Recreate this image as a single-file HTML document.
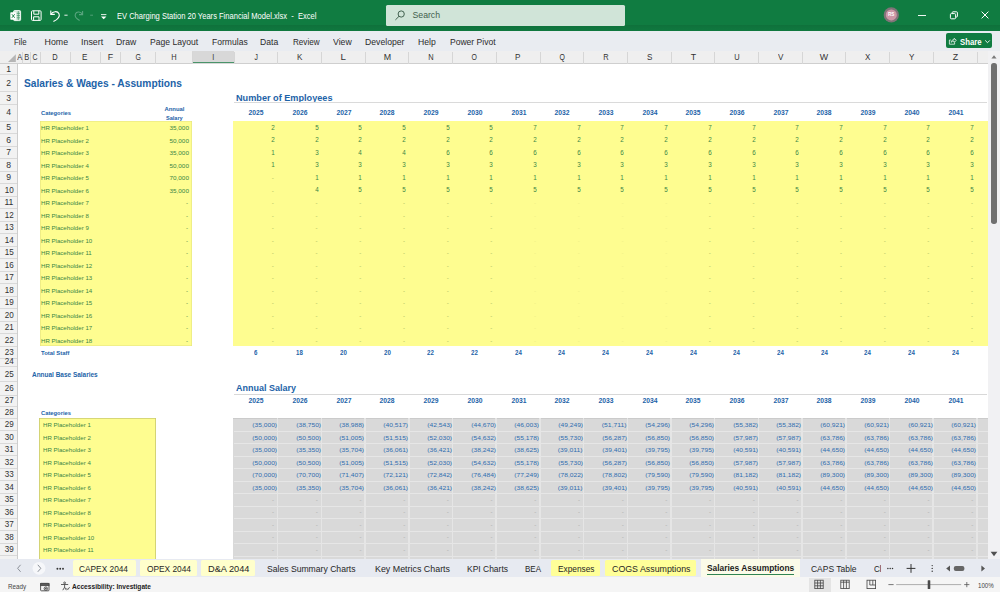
<!DOCTYPE html>
<html><head><meta charset="utf-8"><title>EV Charging Station 20 Years Financial Model.xlsx - Excel</title>
<style>
html,body{margin:0;padding:0;}
body{width:1000px;height:592px;overflow:hidden;background:#fff;font-family:"Liberation Sans",sans-serif;}
#r{position:relative;width:1000px;height:592px;overflow:hidden;}
#r div,#r span,#r svg{position:absolute;display:block;}
#r span{white-space:pre;}
</style></head><body><div id="r">
<div style="left:0.00px;top:0.00px;width:1000.00px;height:592.00px;background:#ffffff;"></div>
<span style="left:24.00px;top:77.40px;font-size:11.5px;line-height:13.80px;color:#1d63a8;font-weight:bold;transform:scaleX(0.8872);transform-origin:0 50%;">Salaries &amp; Wages - Assumptions</span>
<span style="left:40.80px;top:109.48px;font-size:6.2px;line-height:7.44px;color:#1d63a8;font-weight:bold;transform:scaleX(0.9362);transform-origin:0 50%;">Categories</span>
<span style="left:163.69px;top:105.18px;font-size:6.2px;line-height:7.44px;color:#1d63a8;font-weight:bold;transform:scaleX(0.9519);transform-origin:50% 50%;">Annual</span>
<span style="left:164.79px;top:113.68px;font-size:6.2px;line-height:7.44px;color:#1d63a8;font-weight:bold;transform:scaleX(0.9025);transform-origin:50% 50%;">Salary</span>
<div style="left:39.60px;top:121.40px;width:152.40px;height:224.80px;background:#fefd90;box-shadow:inset 0 0 0 0.6px rgba(150,150,80,0.25);"></div>
<span style="left:40.80px;top:124.23px;font-size:6.2px;line-height:7.44px;color:#3a8545;transform:scaleX(0.9850);transform-origin:0 50%;">HR Placeholder 1</span>
<span style="left:169.84px;top:124.23px;font-size:6.2px;line-height:7.44px;color:#3a8545;transform:scaleX(1.0283);transform-origin:100% 50%;">35,000</span>
<span style="left:40.80px;top:136.73px;font-size:6.2px;line-height:7.44px;color:#3a8545;transform:scaleX(0.9850);transform-origin:0 50%;">HR Placeholder 2</span>
<span style="left:169.84px;top:136.73px;font-size:6.2px;line-height:7.44px;color:#3a8545;transform:scaleX(1.0283);transform-origin:100% 50%;">50,000</span>
<span style="left:40.80px;top:149.23px;font-size:6.2px;line-height:7.44px;color:#3a8545;transform:scaleX(0.9850);transform-origin:0 50%;">HR Placeholder 3</span>
<span style="left:169.84px;top:149.23px;font-size:6.2px;line-height:7.44px;color:#3a8545;transform:scaleX(1.0283);transform-origin:100% 50%;">35,000</span>
<span style="left:40.80px;top:161.73px;font-size:6.2px;line-height:7.44px;color:#3a8545;transform:scaleX(0.9850);transform-origin:0 50%;">HR Placeholder 4</span>
<span style="left:169.84px;top:161.73px;font-size:6.2px;line-height:7.44px;color:#3a8545;transform:scaleX(1.0283);transform-origin:100% 50%;">50,000</span>
<span style="left:40.80px;top:174.23px;font-size:6.2px;line-height:7.44px;color:#3a8545;transform:scaleX(0.9850);transform-origin:0 50%;">HR Placeholder 5</span>
<span style="left:169.84px;top:174.23px;font-size:6.2px;line-height:7.44px;color:#3a8545;transform:scaleX(1.0283);transform-origin:100% 50%;">70,000</span>
<span style="left:40.80px;top:186.73px;font-size:6.2px;line-height:7.44px;color:#3a8545;transform:scaleX(0.9850);transform-origin:0 50%;">HR Placeholder 6</span>
<span style="left:169.84px;top:186.73px;font-size:6.2px;line-height:7.44px;color:#3a8545;transform:scaleX(1.0283);transform-origin:100% 50%;">35,000</span>
<span style="left:40.80px;top:199.23px;font-size:6.2px;line-height:7.44px;color:#3a8545;transform:scaleX(0.9850);transform-origin:0 50%;">HR Placeholder 7</span>
<span style="left:185.94px;top:199.23px;font-size:6.2px;line-height:7.44px;color:#3a8545;">-</span>
<span style="left:40.80px;top:211.73px;font-size:6.2px;line-height:7.44px;color:#3a8545;transform:scaleX(0.9850);transform-origin:0 50%;">HR Placeholder 8</span>
<span style="left:185.94px;top:211.73px;font-size:6.2px;line-height:7.44px;color:#3a8545;">-</span>
<span style="left:40.80px;top:224.23px;font-size:6.2px;line-height:7.44px;color:#3a8545;transform:scaleX(0.9850);transform-origin:0 50%;">HR Placeholder 9</span>
<span style="left:185.94px;top:224.23px;font-size:6.2px;line-height:7.44px;color:#3a8545;">-</span>
<span style="left:40.80px;top:236.73px;font-size:6.2px;line-height:7.44px;color:#3a8545;transform:scaleX(0.9850);transform-origin:0 50%;">HR Placeholder 10</span>
<span style="left:185.94px;top:236.73px;font-size:6.2px;line-height:7.44px;color:#3a8545;">-</span>
<span style="left:40.80px;top:249.23px;font-size:6.2px;line-height:7.44px;color:#3a8545;transform:scaleX(0.9850);transform-origin:0 50%;">HR Placeholder 11</span>
<span style="left:185.94px;top:249.23px;font-size:6.2px;line-height:7.44px;color:#3a8545;">-</span>
<span style="left:40.80px;top:261.73px;font-size:6.2px;line-height:7.44px;color:#3a8545;transform:scaleX(0.9850);transform-origin:0 50%;">HR Placeholder 12</span>
<span style="left:185.94px;top:261.73px;font-size:6.2px;line-height:7.44px;color:#3a8545;">-</span>
<span style="left:40.80px;top:274.23px;font-size:6.2px;line-height:7.44px;color:#3a8545;transform:scaleX(0.9850);transform-origin:0 50%;">HR Placeholder 13</span>
<span style="left:185.94px;top:274.23px;font-size:6.2px;line-height:7.44px;color:#3a8545;">-</span>
<span style="left:40.80px;top:286.73px;font-size:6.2px;line-height:7.44px;color:#3a8545;transform:scaleX(0.9850);transform-origin:0 50%;">HR Placeholder 14</span>
<span style="left:185.94px;top:286.73px;font-size:6.2px;line-height:7.44px;color:#3a8545;">-</span>
<span style="left:40.80px;top:299.23px;font-size:6.2px;line-height:7.44px;color:#3a8545;transform:scaleX(0.9850);transform-origin:0 50%;">HR Placeholder 15</span>
<span style="left:185.94px;top:299.23px;font-size:6.2px;line-height:7.44px;color:#3a8545;">-</span>
<span style="left:40.80px;top:311.73px;font-size:6.2px;line-height:7.44px;color:#3a8545;transform:scaleX(0.9850);transform-origin:0 50%;">HR Placeholder 16</span>
<span style="left:185.94px;top:311.73px;font-size:6.2px;line-height:7.44px;color:#3a8545;">-</span>
<span style="left:40.80px;top:324.23px;font-size:6.2px;line-height:7.44px;color:#3a8545;transform:scaleX(0.9850);transform-origin:0 50%;">HR Placeholder 17</span>
<span style="left:185.94px;top:324.23px;font-size:6.2px;line-height:7.44px;color:#3a8545;">-</span>
<span style="left:40.80px;top:336.73px;font-size:6.2px;line-height:7.44px;color:#3a8545;transform:scaleX(0.9850);transform-origin:0 50%;">HR Placeholder 18</span>
<span style="left:185.94px;top:336.73px;font-size:6.2px;line-height:7.44px;color:#3a8545;">-</span>
<span style="left:40.80px;top:348.88px;font-size:6.2px;line-height:7.44px;color:#1d63a8;font-weight:bold;transform:scaleX(0.9547);transform-origin:0 50%;">Total Staff</span>
<span style="left:32.30px;top:370.96px;font-size:6.4px;line-height:7.68px;color:#1d63a8;font-weight:bold;transform:scaleX(1.0108);transform-origin:0 50%;">Annual Base Salaries</span>
<span style="left:235.50px;top:91.92px;font-size:9.8px;line-height:11.76px;color:#1d63a8;font-weight:bold;transform:scaleX(0.9326);transform-origin:0 50%;">Number of Employees</span>
<div style="left:234.00px;top:102.20px;width:752.50px;height:0.90px;background:#dadada;"></div>
<div style="left:233.40px;top:121.40px;width:754.20px;height:224.80px;background:#fefd90;"></div>
<span style="left:249.34px;top:109.42px;font-size:6.3px;line-height:7.56px;color:#1d63a8;font-weight:bold;transform:scaleX(1.0702);transform-origin:50% 50%;">2025</span>
<span style="left:249.34px;top:397.12px;font-size:6.3px;line-height:7.56px;color:#1d63a8;font-weight:bold;transform:scaleX(1.0702);transform-origin:50% 50%;">2025</span>
<span style="left:270.83px;top:123.99px;font-size:6.6px;line-height:7.92px;color:#3a8545;transform:scaleX(0.9535);transform-origin:100% 50%;">2</span>
<span style="left:270.83px;top:136.49px;font-size:6.6px;line-height:7.92px;color:#3a8545;transform:scaleX(0.9535);transform-origin:100% 50%;">2</span>
<span style="left:270.83px;top:148.99px;font-size:6.6px;line-height:7.92px;color:#3a8545;transform:scaleX(0.9535);transform-origin:100% 50%;">1</span>
<span style="left:270.83px;top:161.49px;font-size:6.6px;line-height:7.92px;color:#3a8545;transform:scaleX(0.9535);transform-origin:100% 50%;">1</span>
<span style="left:271.84px;top:174.23px;font-size:6.2px;line-height:7.44px;color:#9fb35a;">-</span>
<span style="left:271.84px;top:186.73px;font-size:6.2px;line-height:7.44px;color:#9fb35a;">-</span>
<span style="left:271.84px;top:199.23px;font-size:6.2px;line-height:7.44px;color:#9fb35a;">-</span>
<span style="left:271.84px;top:211.73px;font-size:6.2px;line-height:7.44px;color:#9fb35a;">-</span>
<span style="left:271.84px;top:224.23px;font-size:6.2px;line-height:7.44px;color:#9fb35a;">-</span>
<span style="left:271.84px;top:236.73px;font-size:6.2px;line-height:7.44px;color:#9fb35a;">-</span>
<span style="left:271.84px;top:249.23px;font-size:6.2px;line-height:7.44px;color:#9fb35a;">-</span>
<span style="left:271.84px;top:261.73px;font-size:6.2px;line-height:7.44px;color:#9fb35a;">-</span>
<span style="left:271.84px;top:274.23px;font-size:6.2px;line-height:7.44px;color:#9fb35a;">-</span>
<span style="left:271.84px;top:286.73px;font-size:6.2px;line-height:7.44px;color:#9fb35a;">-</span>
<span style="left:271.84px;top:299.23px;font-size:6.2px;line-height:7.44px;color:#9fb35a;">-</span>
<span style="left:271.84px;top:311.73px;font-size:6.2px;line-height:7.44px;color:#9fb35a;">-</span>
<span style="left:271.84px;top:324.23px;font-size:6.2px;line-height:7.44px;color:#9fb35a;">-</span>
<span style="left:271.84px;top:336.73px;font-size:6.2px;line-height:7.44px;color:#9fb35a;">-</span>
<span style="left:254.30px;top:348.82px;font-size:6.3px;line-height:7.56px;color:#1d63a8;font-weight:bold;transform:scaleX(0.9704);transform-origin:50% 50%;">6</span>
<span style="left:293.04px;top:109.42px;font-size:6.3px;line-height:7.56px;color:#1d63a8;font-weight:bold;transform:scaleX(1.0702);transform-origin:50% 50%;">2026</span>
<span style="left:293.04px;top:397.12px;font-size:6.3px;line-height:7.56px;color:#1d63a8;font-weight:bold;transform:scaleX(1.0702);transform-origin:50% 50%;">2026</span>
<span style="left:314.53px;top:123.99px;font-size:6.6px;line-height:7.92px;color:#3a8545;transform:scaleX(0.9535);transform-origin:100% 50%;">5</span>
<span style="left:314.53px;top:136.49px;font-size:6.6px;line-height:7.92px;color:#3a8545;transform:scaleX(0.9535);transform-origin:100% 50%;">2</span>
<span style="left:314.53px;top:148.99px;font-size:6.6px;line-height:7.92px;color:#3a8545;transform:scaleX(0.9535);transform-origin:100% 50%;">3</span>
<span style="left:314.53px;top:161.49px;font-size:6.6px;line-height:7.92px;color:#3a8545;transform:scaleX(0.9535);transform-origin:100% 50%;">3</span>
<span style="left:314.53px;top:173.99px;font-size:6.6px;line-height:7.92px;color:#3a8545;transform:scaleX(0.9535);transform-origin:100% 50%;">1</span>
<span style="left:314.53px;top:186.49px;font-size:6.6px;line-height:7.92px;color:#3a8545;transform:scaleX(0.9535);transform-origin:100% 50%;">4</span>
<span style="left:315.54px;top:199.23px;font-size:6.2px;line-height:7.44px;color:#9fb35a;">-</span>
<span style="left:315.54px;top:211.73px;font-size:6.2px;line-height:7.44px;color:#9fb35a;">-</span>
<span style="left:315.54px;top:224.23px;font-size:6.2px;line-height:7.44px;color:#9fb35a;">-</span>
<span style="left:315.54px;top:236.73px;font-size:6.2px;line-height:7.44px;color:#9fb35a;">-</span>
<span style="left:315.54px;top:249.23px;font-size:6.2px;line-height:7.44px;color:#9fb35a;">-</span>
<span style="left:315.54px;top:261.73px;font-size:6.2px;line-height:7.44px;color:#9fb35a;">-</span>
<span style="left:315.54px;top:274.23px;font-size:6.2px;line-height:7.44px;color:#9fb35a;">-</span>
<span style="left:315.54px;top:286.73px;font-size:6.2px;line-height:7.44px;color:#9fb35a;">-</span>
<span style="left:315.54px;top:299.23px;font-size:6.2px;line-height:7.44px;color:#9fb35a;">-</span>
<span style="left:315.54px;top:311.73px;font-size:6.2px;line-height:7.44px;color:#9fb35a;">-</span>
<span style="left:315.54px;top:324.23px;font-size:6.2px;line-height:7.44px;color:#9fb35a;">-</span>
<span style="left:315.54px;top:336.73px;font-size:6.2px;line-height:7.44px;color:#9fb35a;">-</span>
<span style="left:296.25px;top:348.82px;font-size:6.3px;line-height:7.56px;color:#1d63a8;font-weight:bold;transform:scaleX(0.9704);transform-origin:50% 50%;">18</span>
<span style="left:336.74px;top:109.42px;font-size:6.3px;line-height:7.56px;color:#1d63a8;font-weight:bold;transform:scaleX(1.0702);transform-origin:50% 50%;">2027</span>
<span style="left:336.74px;top:397.12px;font-size:6.3px;line-height:7.56px;color:#1d63a8;font-weight:bold;transform:scaleX(1.0702);transform-origin:50% 50%;">2027</span>
<span style="left:358.23px;top:123.99px;font-size:6.6px;line-height:7.92px;color:#3a8545;transform:scaleX(0.9535);transform-origin:100% 50%;">5</span>
<span style="left:358.23px;top:136.49px;font-size:6.6px;line-height:7.92px;color:#3a8545;transform:scaleX(0.9535);transform-origin:100% 50%;">2</span>
<span style="left:358.23px;top:148.99px;font-size:6.6px;line-height:7.92px;color:#3a8545;transform:scaleX(0.9535);transform-origin:100% 50%;">4</span>
<span style="left:358.23px;top:161.49px;font-size:6.6px;line-height:7.92px;color:#3a8545;transform:scaleX(0.9535);transform-origin:100% 50%;">3</span>
<span style="left:358.23px;top:173.99px;font-size:6.6px;line-height:7.92px;color:#3a8545;transform:scaleX(0.9535);transform-origin:100% 50%;">1</span>
<span style="left:358.23px;top:186.49px;font-size:6.6px;line-height:7.92px;color:#3a8545;transform:scaleX(0.9535);transform-origin:100% 50%;">5</span>
<span style="left:359.24px;top:199.23px;font-size:6.2px;line-height:7.44px;color:#9fb35a;">-</span>
<span style="left:359.24px;top:211.73px;font-size:6.2px;line-height:7.44px;color:#9fb35a;">-</span>
<span style="left:359.24px;top:224.23px;font-size:6.2px;line-height:7.44px;color:#9fb35a;">-</span>
<span style="left:359.24px;top:236.73px;font-size:6.2px;line-height:7.44px;color:#9fb35a;">-</span>
<span style="left:359.24px;top:249.23px;font-size:6.2px;line-height:7.44px;color:#9fb35a;">-</span>
<span style="left:359.24px;top:261.73px;font-size:6.2px;line-height:7.44px;color:#9fb35a;">-</span>
<span style="left:359.24px;top:274.23px;font-size:6.2px;line-height:7.44px;color:#9fb35a;">-</span>
<span style="left:359.24px;top:286.73px;font-size:6.2px;line-height:7.44px;color:#9fb35a;">-</span>
<span style="left:359.24px;top:299.23px;font-size:6.2px;line-height:7.44px;color:#9fb35a;">-</span>
<span style="left:359.24px;top:311.73px;font-size:6.2px;line-height:7.44px;color:#9fb35a;">-</span>
<span style="left:359.24px;top:324.23px;font-size:6.2px;line-height:7.44px;color:#9fb35a;">-</span>
<span style="left:359.24px;top:336.73px;font-size:6.2px;line-height:7.44px;color:#9fb35a;">-</span>
<span style="left:339.95px;top:348.82px;font-size:6.3px;line-height:7.56px;color:#1d63a8;font-weight:bold;transform:scaleX(0.9704);transform-origin:50% 50%;">20</span>
<span style="left:380.44px;top:109.42px;font-size:6.3px;line-height:7.56px;color:#1d63a8;font-weight:bold;transform:scaleX(1.0702);transform-origin:50% 50%;">2028</span>
<span style="left:380.44px;top:397.12px;font-size:6.3px;line-height:7.56px;color:#1d63a8;font-weight:bold;transform:scaleX(1.0702);transform-origin:50% 50%;">2028</span>
<span style="left:401.93px;top:123.99px;font-size:6.6px;line-height:7.92px;color:#3a8545;transform:scaleX(0.9535);transform-origin:100% 50%;">5</span>
<span style="left:401.93px;top:136.49px;font-size:6.6px;line-height:7.92px;color:#3a8545;transform:scaleX(0.9535);transform-origin:100% 50%;">2</span>
<span style="left:401.93px;top:148.99px;font-size:6.6px;line-height:7.92px;color:#3a8545;transform:scaleX(0.9535);transform-origin:100% 50%;">4</span>
<span style="left:401.93px;top:161.49px;font-size:6.6px;line-height:7.92px;color:#3a8545;transform:scaleX(0.9535);transform-origin:100% 50%;">3</span>
<span style="left:401.93px;top:173.99px;font-size:6.6px;line-height:7.92px;color:#3a8545;transform:scaleX(0.9535);transform-origin:100% 50%;">1</span>
<span style="left:401.93px;top:186.49px;font-size:6.6px;line-height:7.92px;color:#3a8545;transform:scaleX(0.9535);transform-origin:100% 50%;">5</span>
<span style="left:402.94px;top:199.23px;font-size:6.2px;line-height:7.44px;color:#9fb35a;">-</span>
<span style="left:402.94px;top:211.73px;font-size:6.2px;line-height:7.44px;color:#9fb35a;">-</span>
<span style="left:402.94px;top:224.23px;font-size:6.2px;line-height:7.44px;color:#9fb35a;">-</span>
<span style="left:402.94px;top:236.73px;font-size:6.2px;line-height:7.44px;color:#9fb35a;">-</span>
<span style="left:402.94px;top:249.23px;font-size:6.2px;line-height:7.44px;color:#9fb35a;">-</span>
<span style="left:402.94px;top:261.73px;font-size:6.2px;line-height:7.44px;color:#9fb35a;">-</span>
<span style="left:402.94px;top:274.23px;font-size:6.2px;line-height:7.44px;color:#9fb35a;">-</span>
<span style="left:402.94px;top:286.73px;font-size:6.2px;line-height:7.44px;color:#9fb35a;">-</span>
<span style="left:402.94px;top:299.23px;font-size:6.2px;line-height:7.44px;color:#9fb35a;">-</span>
<span style="left:402.94px;top:311.73px;font-size:6.2px;line-height:7.44px;color:#9fb35a;">-</span>
<span style="left:402.94px;top:324.23px;font-size:6.2px;line-height:7.44px;color:#9fb35a;">-</span>
<span style="left:402.94px;top:336.73px;font-size:6.2px;line-height:7.44px;color:#9fb35a;">-</span>
<span style="left:383.65px;top:348.82px;font-size:6.3px;line-height:7.56px;color:#1d63a8;font-weight:bold;transform:scaleX(0.9704);transform-origin:50% 50%;">20</span>
<span style="left:424.14px;top:109.42px;font-size:6.3px;line-height:7.56px;color:#1d63a8;font-weight:bold;transform:scaleX(1.0702);transform-origin:50% 50%;">2029</span>
<span style="left:424.14px;top:397.12px;font-size:6.3px;line-height:7.56px;color:#1d63a8;font-weight:bold;transform:scaleX(1.0702);transform-origin:50% 50%;">2029</span>
<span style="left:445.63px;top:123.99px;font-size:6.6px;line-height:7.92px;color:#3a8545;transform:scaleX(0.9535);transform-origin:100% 50%;">5</span>
<span style="left:445.63px;top:136.49px;font-size:6.6px;line-height:7.92px;color:#3a8545;transform:scaleX(0.9535);transform-origin:100% 50%;">2</span>
<span style="left:445.63px;top:148.99px;font-size:6.6px;line-height:7.92px;color:#3a8545;transform:scaleX(0.9535);transform-origin:100% 50%;">6</span>
<span style="left:445.63px;top:161.49px;font-size:6.6px;line-height:7.92px;color:#3a8545;transform:scaleX(0.9535);transform-origin:100% 50%;">3</span>
<span style="left:445.63px;top:173.99px;font-size:6.6px;line-height:7.92px;color:#3a8545;transform:scaleX(0.9535);transform-origin:100% 50%;">1</span>
<span style="left:445.63px;top:186.49px;font-size:6.6px;line-height:7.92px;color:#3a8545;transform:scaleX(0.9535);transform-origin:100% 50%;">5</span>
<span style="left:446.64px;top:199.23px;font-size:6.2px;line-height:7.44px;color:#9fb35a;">-</span>
<span style="left:446.64px;top:211.73px;font-size:6.2px;line-height:7.44px;color:#9fb35a;">-</span>
<span style="left:446.64px;top:224.23px;font-size:6.2px;line-height:7.44px;color:#9fb35a;">-</span>
<span style="left:446.64px;top:236.73px;font-size:6.2px;line-height:7.44px;color:#9fb35a;">-</span>
<span style="left:446.64px;top:249.23px;font-size:6.2px;line-height:7.44px;color:#9fb35a;">-</span>
<span style="left:446.64px;top:261.73px;font-size:6.2px;line-height:7.44px;color:#9fb35a;">-</span>
<span style="left:446.64px;top:274.23px;font-size:6.2px;line-height:7.44px;color:#9fb35a;">-</span>
<span style="left:446.64px;top:286.73px;font-size:6.2px;line-height:7.44px;color:#9fb35a;">-</span>
<span style="left:446.64px;top:299.23px;font-size:6.2px;line-height:7.44px;color:#9fb35a;">-</span>
<span style="left:446.64px;top:311.73px;font-size:6.2px;line-height:7.44px;color:#9fb35a;">-</span>
<span style="left:446.64px;top:324.23px;font-size:6.2px;line-height:7.44px;color:#9fb35a;">-</span>
<span style="left:446.64px;top:336.73px;font-size:6.2px;line-height:7.44px;color:#9fb35a;">-</span>
<span style="left:427.35px;top:348.82px;font-size:6.3px;line-height:7.56px;color:#1d63a8;font-weight:bold;transform:scaleX(0.9704);transform-origin:50% 50%;">22</span>
<span style="left:467.84px;top:109.42px;font-size:6.3px;line-height:7.56px;color:#1d63a8;font-weight:bold;transform:scaleX(1.0702);transform-origin:50% 50%;">2030</span>
<span style="left:467.84px;top:397.12px;font-size:6.3px;line-height:7.56px;color:#1d63a8;font-weight:bold;transform:scaleX(1.0702);transform-origin:50% 50%;">2030</span>
<span style="left:489.33px;top:123.99px;font-size:6.6px;line-height:7.92px;color:#3a8545;transform:scaleX(0.9535);transform-origin:100% 50%;">5</span>
<span style="left:489.33px;top:136.49px;font-size:6.6px;line-height:7.92px;color:#3a8545;transform:scaleX(0.9535);transform-origin:100% 50%;">2</span>
<span style="left:489.33px;top:148.99px;font-size:6.6px;line-height:7.92px;color:#3a8545;transform:scaleX(0.9535);transform-origin:100% 50%;">6</span>
<span style="left:489.33px;top:161.49px;font-size:6.6px;line-height:7.92px;color:#3a8545;transform:scaleX(0.9535);transform-origin:100% 50%;">3</span>
<span style="left:489.33px;top:173.99px;font-size:6.6px;line-height:7.92px;color:#3a8545;transform:scaleX(0.9535);transform-origin:100% 50%;">1</span>
<span style="left:489.33px;top:186.49px;font-size:6.6px;line-height:7.92px;color:#3a8545;transform:scaleX(0.9535);transform-origin:100% 50%;">5</span>
<span style="left:490.34px;top:199.23px;font-size:6.2px;line-height:7.44px;color:#9fb35a;">-</span>
<span style="left:490.34px;top:211.73px;font-size:6.2px;line-height:7.44px;color:#9fb35a;">-</span>
<span style="left:490.34px;top:224.23px;font-size:6.2px;line-height:7.44px;color:#9fb35a;">-</span>
<span style="left:490.34px;top:236.73px;font-size:6.2px;line-height:7.44px;color:#9fb35a;">-</span>
<span style="left:490.34px;top:249.23px;font-size:6.2px;line-height:7.44px;color:#9fb35a;">-</span>
<span style="left:490.34px;top:261.73px;font-size:6.2px;line-height:7.44px;color:#9fb35a;">-</span>
<span style="left:490.34px;top:274.23px;font-size:6.2px;line-height:7.44px;color:#9fb35a;">-</span>
<span style="left:490.34px;top:286.73px;font-size:6.2px;line-height:7.44px;color:#9fb35a;">-</span>
<span style="left:490.34px;top:299.23px;font-size:6.2px;line-height:7.44px;color:#9fb35a;">-</span>
<span style="left:490.34px;top:311.73px;font-size:6.2px;line-height:7.44px;color:#9fb35a;">-</span>
<span style="left:490.34px;top:324.23px;font-size:6.2px;line-height:7.44px;color:#9fb35a;">-</span>
<span style="left:490.34px;top:336.73px;font-size:6.2px;line-height:7.44px;color:#9fb35a;">-</span>
<span style="left:471.05px;top:348.82px;font-size:6.3px;line-height:7.56px;color:#1d63a8;font-weight:bold;transform:scaleX(0.9704);transform-origin:50% 50%;">22</span>
<span style="left:511.54px;top:109.42px;font-size:6.3px;line-height:7.56px;color:#1d63a8;font-weight:bold;transform:scaleX(1.0702);transform-origin:50% 50%;">2031</span>
<span style="left:511.54px;top:397.12px;font-size:6.3px;line-height:7.56px;color:#1d63a8;font-weight:bold;transform:scaleX(1.0702);transform-origin:50% 50%;">2031</span>
<span style="left:533.03px;top:123.99px;font-size:6.6px;line-height:7.92px;color:#3a8545;transform:scaleX(0.9535);transform-origin:100% 50%;">7</span>
<span style="left:533.03px;top:136.49px;font-size:6.6px;line-height:7.92px;color:#3a8545;transform:scaleX(0.9535);transform-origin:100% 50%;">2</span>
<span style="left:533.03px;top:148.99px;font-size:6.6px;line-height:7.92px;color:#3a8545;transform:scaleX(0.9535);transform-origin:100% 50%;">6</span>
<span style="left:533.03px;top:161.49px;font-size:6.6px;line-height:7.92px;color:#3a8545;transform:scaleX(0.9535);transform-origin:100% 50%;">3</span>
<span style="left:533.03px;top:173.99px;font-size:6.6px;line-height:7.92px;color:#3a8545;transform:scaleX(0.9535);transform-origin:100% 50%;">1</span>
<span style="left:533.03px;top:186.49px;font-size:6.6px;line-height:7.92px;color:#3a8545;transform:scaleX(0.9535);transform-origin:100% 50%;">5</span>
<span style="left:534.04px;top:199.23px;font-size:6.2px;line-height:7.44px;color:#ecec84;">-</span>
<span style="left:534.04px;top:211.73px;font-size:6.2px;line-height:7.44px;color:#ecec84;">-</span>
<span style="left:534.04px;top:224.23px;font-size:6.2px;line-height:7.44px;color:#ecec84;">-</span>
<span style="left:534.04px;top:236.73px;font-size:6.2px;line-height:7.44px;color:#ecec84;">-</span>
<span style="left:534.04px;top:249.23px;font-size:6.2px;line-height:7.44px;color:#ecec84;">-</span>
<span style="left:534.04px;top:261.73px;font-size:6.2px;line-height:7.44px;color:#ecec84;">-</span>
<span style="left:534.04px;top:274.23px;font-size:6.2px;line-height:7.44px;color:#ecec84;">-</span>
<span style="left:534.04px;top:286.73px;font-size:6.2px;line-height:7.44px;color:#ecec84;">-</span>
<span style="left:534.04px;top:299.23px;font-size:6.2px;line-height:7.44px;color:#ecec84;">-</span>
<span style="left:534.04px;top:311.73px;font-size:6.2px;line-height:7.44px;color:#ecec84;">-</span>
<span style="left:534.04px;top:324.23px;font-size:6.2px;line-height:7.44px;color:#ecec84;">-</span>
<span style="left:534.04px;top:336.73px;font-size:6.2px;line-height:7.44px;color:#ecec84;">-</span>
<span style="left:514.75px;top:348.82px;font-size:6.3px;line-height:7.56px;color:#1d63a8;font-weight:bold;transform:scaleX(0.9704);transform-origin:50% 50%;">24</span>
<span style="left:555.24px;top:109.42px;font-size:6.3px;line-height:7.56px;color:#1d63a8;font-weight:bold;transform:scaleX(1.0702);transform-origin:50% 50%;">2032</span>
<span style="left:555.24px;top:397.12px;font-size:6.3px;line-height:7.56px;color:#1d63a8;font-weight:bold;transform:scaleX(1.0702);transform-origin:50% 50%;">2032</span>
<span style="left:576.73px;top:123.99px;font-size:6.6px;line-height:7.92px;color:#3a8545;transform:scaleX(0.9535);transform-origin:100% 50%;">7</span>
<span style="left:576.73px;top:136.49px;font-size:6.6px;line-height:7.92px;color:#3a8545;transform:scaleX(0.9535);transform-origin:100% 50%;">2</span>
<span style="left:576.73px;top:148.99px;font-size:6.6px;line-height:7.92px;color:#3a8545;transform:scaleX(0.9535);transform-origin:100% 50%;">6</span>
<span style="left:576.73px;top:161.49px;font-size:6.6px;line-height:7.92px;color:#3a8545;transform:scaleX(0.9535);transform-origin:100% 50%;">3</span>
<span style="left:576.73px;top:173.99px;font-size:6.6px;line-height:7.92px;color:#3a8545;transform:scaleX(0.9535);transform-origin:100% 50%;">1</span>
<span style="left:576.73px;top:186.49px;font-size:6.6px;line-height:7.92px;color:#3a8545;transform:scaleX(0.9535);transform-origin:100% 50%;">5</span>
<span style="left:577.74px;top:199.23px;font-size:6.2px;line-height:7.44px;color:#ecec84;">-</span>
<span style="left:577.74px;top:211.73px;font-size:6.2px;line-height:7.44px;color:#ecec84;">-</span>
<span style="left:577.74px;top:224.23px;font-size:6.2px;line-height:7.44px;color:#ecec84;">-</span>
<span style="left:577.74px;top:236.73px;font-size:6.2px;line-height:7.44px;color:#ecec84;">-</span>
<span style="left:577.74px;top:249.23px;font-size:6.2px;line-height:7.44px;color:#ecec84;">-</span>
<span style="left:577.74px;top:261.73px;font-size:6.2px;line-height:7.44px;color:#ecec84;">-</span>
<span style="left:577.74px;top:274.23px;font-size:6.2px;line-height:7.44px;color:#ecec84;">-</span>
<span style="left:577.74px;top:286.73px;font-size:6.2px;line-height:7.44px;color:#ecec84;">-</span>
<span style="left:577.74px;top:299.23px;font-size:6.2px;line-height:7.44px;color:#ecec84;">-</span>
<span style="left:577.74px;top:311.73px;font-size:6.2px;line-height:7.44px;color:#ecec84;">-</span>
<span style="left:577.74px;top:324.23px;font-size:6.2px;line-height:7.44px;color:#ecec84;">-</span>
<span style="left:577.74px;top:336.73px;font-size:6.2px;line-height:7.44px;color:#ecec84;">-</span>
<span style="left:558.45px;top:348.82px;font-size:6.3px;line-height:7.56px;color:#1d63a8;font-weight:bold;transform:scaleX(0.9704);transform-origin:50% 50%;">24</span>
<span style="left:598.94px;top:109.42px;font-size:6.3px;line-height:7.56px;color:#1d63a8;font-weight:bold;transform:scaleX(1.0702);transform-origin:50% 50%;">2033</span>
<span style="left:598.94px;top:397.12px;font-size:6.3px;line-height:7.56px;color:#1d63a8;font-weight:bold;transform:scaleX(1.0702);transform-origin:50% 50%;">2033</span>
<span style="left:620.43px;top:123.99px;font-size:6.6px;line-height:7.92px;color:#3a8545;transform:scaleX(0.9535);transform-origin:100% 50%;">7</span>
<span style="left:620.43px;top:136.49px;font-size:6.6px;line-height:7.92px;color:#3a8545;transform:scaleX(0.9535);transform-origin:100% 50%;">2</span>
<span style="left:620.43px;top:148.99px;font-size:6.6px;line-height:7.92px;color:#3a8545;transform:scaleX(0.9535);transform-origin:100% 50%;">6</span>
<span style="left:620.43px;top:161.49px;font-size:6.6px;line-height:7.92px;color:#3a8545;transform:scaleX(0.9535);transform-origin:100% 50%;">3</span>
<span style="left:620.43px;top:173.99px;font-size:6.6px;line-height:7.92px;color:#3a8545;transform:scaleX(0.9535);transform-origin:100% 50%;">1</span>
<span style="left:620.43px;top:186.49px;font-size:6.6px;line-height:7.92px;color:#3a8545;transform:scaleX(0.9535);transform-origin:100% 50%;">5</span>
<span style="left:621.44px;top:199.23px;font-size:6.2px;line-height:7.44px;color:#ecec84;">-</span>
<span style="left:621.44px;top:211.73px;font-size:6.2px;line-height:7.44px;color:#ecec84;">-</span>
<span style="left:621.44px;top:224.23px;font-size:6.2px;line-height:7.44px;color:#ecec84;">-</span>
<span style="left:621.44px;top:236.73px;font-size:6.2px;line-height:7.44px;color:#ecec84;">-</span>
<span style="left:621.44px;top:249.23px;font-size:6.2px;line-height:7.44px;color:#ecec84;">-</span>
<span style="left:621.44px;top:261.73px;font-size:6.2px;line-height:7.44px;color:#ecec84;">-</span>
<span style="left:621.44px;top:274.23px;font-size:6.2px;line-height:7.44px;color:#ecec84;">-</span>
<span style="left:621.44px;top:286.73px;font-size:6.2px;line-height:7.44px;color:#ecec84;">-</span>
<span style="left:621.44px;top:299.23px;font-size:6.2px;line-height:7.44px;color:#ecec84;">-</span>
<span style="left:621.44px;top:311.73px;font-size:6.2px;line-height:7.44px;color:#ecec84;">-</span>
<span style="left:621.44px;top:324.23px;font-size:6.2px;line-height:7.44px;color:#ecec84;">-</span>
<span style="left:621.44px;top:336.73px;font-size:6.2px;line-height:7.44px;color:#ecec84;">-</span>
<span style="left:602.15px;top:348.82px;font-size:6.3px;line-height:7.56px;color:#1d63a8;font-weight:bold;transform:scaleX(0.9704);transform-origin:50% 50%;">24</span>
<span style="left:642.64px;top:109.42px;font-size:6.3px;line-height:7.56px;color:#1d63a8;font-weight:bold;transform:scaleX(1.0702);transform-origin:50% 50%;">2034</span>
<span style="left:642.64px;top:397.12px;font-size:6.3px;line-height:7.56px;color:#1d63a8;font-weight:bold;transform:scaleX(1.0702);transform-origin:50% 50%;">2034</span>
<span style="left:664.13px;top:123.99px;font-size:6.6px;line-height:7.92px;color:#3a8545;transform:scaleX(0.9535);transform-origin:100% 50%;">7</span>
<span style="left:664.13px;top:136.49px;font-size:6.6px;line-height:7.92px;color:#3a8545;transform:scaleX(0.9535);transform-origin:100% 50%;">2</span>
<span style="left:664.13px;top:148.99px;font-size:6.6px;line-height:7.92px;color:#3a8545;transform:scaleX(0.9535);transform-origin:100% 50%;">6</span>
<span style="left:664.13px;top:161.49px;font-size:6.6px;line-height:7.92px;color:#3a8545;transform:scaleX(0.9535);transform-origin:100% 50%;">3</span>
<span style="left:664.13px;top:173.99px;font-size:6.6px;line-height:7.92px;color:#3a8545;transform:scaleX(0.9535);transform-origin:100% 50%;">1</span>
<span style="left:664.13px;top:186.49px;font-size:6.6px;line-height:7.92px;color:#3a8545;transform:scaleX(0.9535);transform-origin:100% 50%;">5</span>
<span style="left:665.14px;top:199.23px;font-size:6.2px;line-height:7.44px;color:#ecec84;">-</span>
<span style="left:665.14px;top:211.73px;font-size:6.2px;line-height:7.44px;color:#ecec84;">-</span>
<span style="left:665.14px;top:224.23px;font-size:6.2px;line-height:7.44px;color:#ecec84;">-</span>
<span style="left:665.14px;top:236.73px;font-size:6.2px;line-height:7.44px;color:#ecec84;">-</span>
<span style="left:665.14px;top:249.23px;font-size:6.2px;line-height:7.44px;color:#ecec84;">-</span>
<span style="left:665.14px;top:261.73px;font-size:6.2px;line-height:7.44px;color:#ecec84;">-</span>
<span style="left:665.14px;top:274.23px;font-size:6.2px;line-height:7.44px;color:#ecec84;">-</span>
<span style="left:665.14px;top:286.73px;font-size:6.2px;line-height:7.44px;color:#ecec84;">-</span>
<span style="left:665.14px;top:299.23px;font-size:6.2px;line-height:7.44px;color:#ecec84;">-</span>
<span style="left:665.14px;top:311.73px;font-size:6.2px;line-height:7.44px;color:#ecec84;">-</span>
<span style="left:665.14px;top:324.23px;font-size:6.2px;line-height:7.44px;color:#ecec84;">-</span>
<span style="left:665.14px;top:336.73px;font-size:6.2px;line-height:7.44px;color:#ecec84;">-</span>
<span style="left:645.85px;top:348.82px;font-size:6.3px;line-height:7.56px;color:#1d63a8;font-weight:bold;transform:scaleX(0.9704);transform-origin:50% 50%;">24</span>
<span style="left:686.34px;top:109.42px;font-size:6.3px;line-height:7.56px;color:#1d63a8;font-weight:bold;transform:scaleX(1.0702);transform-origin:50% 50%;">2035</span>
<span style="left:686.34px;top:397.12px;font-size:6.3px;line-height:7.56px;color:#1d63a8;font-weight:bold;transform:scaleX(1.0702);transform-origin:50% 50%;">2035</span>
<span style="left:707.83px;top:123.99px;font-size:6.6px;line-height:7.92px;color:#3a8545;transform:scaleX(0.9535);transform-origin:100% 50%;">7</span>
<span style="left:707.83px;top:136.49px;font-size:6.6px;line-height:7.92px;color:#3a8545;transform:scaleX(0.9535);transform-origin:100% 50%;">2</span>
<span style="left:707.83px;top:148.99px;font-size:6.6px;line-height:7.92px;color:#3a8545;transform:scaleX(0.9535);transform-origin:100% 50%;">6</span>
<span style="left:707.83px;top:161.49px;font-size:6.6px;line-height:7.92px;color:#3a8545;transform:scaleX(0.9535);transform-origin:100% 50%;">3</span>
<span style="left:707.83px;top:173.99px;font-size:6.6px;line-height:7.92px;color:#3a8545;transform:scaleX(0.9535);transform-origin:100% 50%;">1</span>
<span style="left:707.83px;top:186.49px;font-size:6.6px;line-height:7.92px;color:#3a8545;transform:scaleX(0.9535);transform-origin:100% 50%;">5</span>
<span style="left:708.84px;top:199.23px;font-size:6.2px;line-height:7.44px;color:#9fb35a;">-</span>
<span style="left:708.84px;top:211.73px;font-size:6.2px;line-height:7.44px;color:#9fb35a;">-</span>
<span style="left:708.84px;top:224.23px;font-size:6.2px;line-height:7.44px;color:#9fb35a;">-</span>
<span style="left:708.84px;top:236.73px;font-size:6.2px;line-height:7.44px;color:#9fb35a;">-</span>
<span style="left:708.84px;top:249.23px;font-size:6.2px;line-height:7.44px;color:#9fb35a;">-</span>
<span style="left:708.84px;top:261.73px;font-size:6.2px;line-height:7.44px;color:#9fb35a;">-</span>
<span style="left:708.84px;top:274.23px;font-size:6.2px;line-height:7.44px;color:#9fb35a;">-</span>
<span style="left:708.84px;top:286.73px;font-size:6.2px;line-height:7.44px;color:#9fb35a;">-</span>
<span style="left:708.84px;top:299.23px;font-size:6.2px;line-height:7.44px;color:#9fb35a;">-</span>
<span style="left:708.84px;top:311.73px;font-size:6.2px;line-height:7.44px;color:#9fb35a;">-</span>
<span style="left:708.84px;top:324.23px;font-size:6.2px;line-height:7.44px;color:#9fb35a;">-</span>
<span style="left:708.84px;top:336.73px;font-size:6.2px;line-height:7.44px;color:#9fb35a;">-</span>
<span style="left:689.55px;top:348.82px;font-size:6.3px;line-height:7.56px;color:#1d63a8;font-weight:bold;transform:scaleX(0.9704);transform-origin:50% 50%;">24</span>
<span style="left:730.04px;top:109.42px;font-size:6.3px;line-height:7.56px;color:#1d63a8;font-weight:bold;transform:scaleX(1.0702);transform-origin:50% 50%;">2036</span>
<span style="left:730.04px;top:397.12px;font-size:6.3px;line-height:7.56px;color:#1d63a8;font-weight:bold;transform:scaleX(1.0702);transform-origin:50% 50%;">2036</span>
<span style="left:751.53px;top:123.99px;font-size:6.6px;line-height:7.92px;color:#3a8545;transform:scaleX(0.9535);transform-origin:100% 50%;">7</span>
<span style="left:751.53px;top:136.49px;font-size:6.6px;line-height:7.92px;color:#3a8545;transform:scaleX(0.9535);transform-origin:100% 50%;">2</span>
<span style="left:751.53px;top:148.99px;font-size:6.6px;line-height:7.92px;color:#3a8545;transform:scaleX(0.9535);transform-origin:100% 50%;">6</span>
<span style="left:751.53px;top:161.49px;font-size:6.6px;line-height:7.92px;color:#3a8545;transform:scaleX(0.9535);transform-origin:100% 50%;">3</span>
<span style="left:751.53px;top:173.99px;font-size:6.6px;line-height:7.92px;color:#3a8545;transform:scaleX(0.9535);transform-origin:100% 50%;">1</span>
<span style="left:751.53px;top:186.49px;font-size:6.6px;line-height:7.92px;color:#3a8545;transform:scaleX(0.9535);transform-origin:100% 50%;">5</span>
<span style="left:752.54px;top:199.23px;font-size:6.2px;line-height:7.44px;color:#9fb35a;">-</span>
<span style="left:752.54px;top:211.73px;font-size:6.2px;line-height:7.44px;color:#9fb35a;">-</span>
<span style="left:752.54px;top:224.23px;font-size:6.2px;line-height:7.44px;color:#9fb35a;">-</span>
<span style="left:752.54px;top:236.73px;font-size:6.2px;line-height:7.44px;color:#9fb35a;">-</span>
<span style="left:752.54px;top:249.23px;font-size:6.2px;line-height:7.44px;color:#9fb35a;">-</span>
<span style="left:752.54px;top:261.73px;font-size:6.2px;line-height:7.44px;color:#9fb35a;">-</span>
<span style="left:752.54px;top:274.23px;font-size:6.2px;line-height:7.44px;color:#9fb35a;">-</span>
<span style="left:752.54px;top:286.73px;font-size:6.2px;line-height:7.44px;color:#9fb35a;">-</span>
<span style="left:752.54px;top:299.23px;font-size:6.2px;line-height:7.44px;color:#9fb35a;">-</span>
<span style="left:752.54px;top:311.73px;font-size:6.2px;line-height:7.44px;color:#9fb35a;">-</span>
<span style="left:752.54px;top:324.23px;font-size:6.2px;line-height:7.44px;color:#9fb35a;">-</span>
<span style="left:752.54px;top:336.73px;font-size:6.2px;line-height:7.44px;color:#9fb35a;">-</span>
<span style="left:733.25px;top:348.82px;font-size:6.3px;line-height:7.56px;color:#1d63a8;font-weight:bold;transform:scaleX(0.9704);transform-origin:50% 50%;">24</span>
<span style="left:773.74px;top:109.42px;font-size:6.3px;line-height:7.56px;color:#1d63a8;font-weight:bold;transform:scaleX(1.0702);transform-origin:50% 50%;">2037</span>
<span style="left:773.74px;top:397.12px;font-size:6.3px;line-height:7.56px;color:#1d63a8;font-weight:bold;transform:scaleX(1.0702);transform-origin:50% 50%;">2037</span>
<span style="left:795.23px;top:123.99px;font-size:6.6px;line-height:7.92px;color:#3a8545;transform:scaleX(0.9535);transform-origin:100% 50%;">7</span>
<span style="left:795.23px;top:136.49px;font-size:6.6px;line-height:7.92px;color:#3a8545;transform:scaleX(0.9535);transform-origin:100% 50%;">2</span>
<span style="left:795.23px;top:148.99px;font-size:6.6px;line-height:7.92px;color:#3a8545;transform:scaleX(0.9535);transform-origin:100% 50%;">6</span>
<span style="left:795.23px;top:161.49px;font-size:6.6px;line-height:7.92px;color:#3a8545;transform:scaleX(0.9535);transform-origin:100% 50%;">3</span>
<span style="left:795.23px;top:173.99px;font-size:6.6px;line-height:7.92px;color:#3a8545;transform:scaleX(0.9535);transform-origin:100% 50%;">1</span>
<span style="left:795.23px;top:186.49px;font-size:6.6px;line-height:7.92px;color:#3a8545;transform:scaleX(0.9535);transform-origin:100% 50%;">5</span>
<span style="left:796.24px;top:199.23px;font-size:6.2px;line-height:7.44px;color:#9fb35a;">-</span>
<span style="left:796.24px;top:211.73px;font-size:6.2px;line-height:7.44px;color:#9fb35a;">-</span>
<span style="left:796.24px;top:224.23px;font-size:6.2px;line-height:7.44px;color:#9fb35a;">-</span>
<span style="left:796.24px;top:236.73px;font-size:6.2px;line-height:7.44px;color:#9fb35a;">-</span>
<span style="left:796.24px;top:249.23px;font-size:6.2px;line-height:7.44px;color:#9fb35a;">-</span>
<span style="left:796.24px;top:261.73px;font-size:6.2px;line-height:7.44px;color:#9fb35a;">-</span>
<span style="left:796.24px;top:274.23px;font-size:6.2px;line-height:7.44px;color:#9fb35a;">-</span>
<span style="left:796.24px;top:286.73px;font-size:6.2px;line-height:7.44px;color:#9fb35a;">-</span>
<span style="left:796.24px;top:299.23px;font-size:6.2px;line-height:7.44px;color:#9fb35a;">-</span>
<span style="left:796.24px;top:311.73px;font-size:6.2px;line-height:7.44px;color:#9fb35a;">-</span>
<span style="left:796.24px;top:324.23px;font-size:6.2px;line-height:7.44px;color:#9fb35a;">-</span>
<span style="left:796.24px;top:336.73px;font-size:6.2px;line-height:7.44px;color:#9fb35a;">-</span>
<span style="left:776.95px;top:348.82px;font-size:6.3px;line-height:7.56px;color:#1d63a8;font-weight:bold;transform:scaleX(0.9704);transform-origin:50% 50%;">24</span>
<span style="left:817.44px;top:109.42px;font-size:6.3px;line-height:7.56px;color:#1d63a8;font-weight:bold;transform:scaleX(1.0702);transform-origin:50% 50%;">2038</span>
<span style="left:817.44px;top:397.12px;font-size:6.3px;line-height:7.56px;color:#1d63a8;font-weight:bold;transform:scaleX(1.0702);transform-origin:50% 50%;">2038</span>
<span style="left:838.93px;top:123.99px;font-size:6.6px;line-height:7.92px;color:#3a8545;transform:scaleX(0.9535);transform-origin:100% 50%;">7</span>
<span style="left:838.93px;top:136.49px;font-size:6.6px;line-height:7.92px;color:#3a8545;transform:scaleX(0.9535);transform-origin:100% 50%;">2</span>
<span style="left:838.93px;top:148.99px;font-size:6.6px;line-height:7.92px;color:#3a8545;transform:scaleX(0.9535);transform-origin:100% 50%;">6</span>
<span style="left:838.93px;top:161.49px;font-size:6.6px;line-height:7.92px;color:#3a8545;transform:scaleX(0.9535);transform-origin:100% 50%;">3</span>
<span style="left:838.93px;top:173.99px;font-size:6.6px;line-height:7.92px;color:#3a8545;transform:scaleX(0.9535);transform-origin:100% 50%;">1</span>
<span style="left:838.93px;top:186.49px;font-size:6.6px;line-height:7.92px;color:#3a8545;transform:scaleX(0.9535);transform-origin:100% 50%;">5</span>
<span style="left:839.94px;top:199.23px;font-size:6.2px;line-height:7.44px;color:#9fb35a;">-</span>
<span style="left:839.94px;top:211.73px;font-size:6.2px;line-height:7.44px;color:#9fb35a;">-</span>
<span style="left:839.94px;top:224.23px;font-size:6.2px;line-height:7.44px;color:#9fb35a;">-</span>
<span style="left:839.94px;top:236.73px;font-size:6.2px;line-height:7.44px;color:#9fb35a;">-</span>
<span style="left:839.94px;top:249.23px;font-size:6.2px;line-height:7.44px;color:#9fb35a;">-</span>
<span style="left:839.94px;top:261.73px;font-size:6.2px;line-height:7.44px;color:#9fb35a;">-</span>
<span style="left:839.94px;top:274.23px;font-size:6.2px;line-height:7.44px;color:#9fb35a;">-</span>
<span style="left:839.94px;top:286.73px;font-size:6.2px;line-height:7.44px;color:#9fb35a;">-</span>
<span style="left:839.94px;top:299.23px;font-size:6.2px;line-height:7.44px;color:#9fb35a;">-</span>
<span style="left:839.94px;top:311.73px;font-size:6.2px;line-height:7.44px;color:#9fb35a;">-</span>
<span style="left:839.94px;top:324.23px;font-size:6.2px;line-height:7.44px;color:#9fb35a;">-</span>
<span style="left:839.94px;top:336.73px;font-size:6.2px;line-height:7.44px;color:#9fb35a;">-</span>
<span style="left:820.65px;top:348.82px;font-size:6.3px;line-height:7.56px;color:#1d63a8;font-weight:bold;transform:scaleX(0.9704);transform-origin:50% 50%;">24</span>
<span style="left:861.14px;top:109.42px;font-size:6.3px;line-height:7.56px;color:#1d63a8;font-weight:bold;transform:scaleX(1.0702);transform-origin:50% 50%;">2039</span>
<span style="left:861.14px;top:397.12px;font-size:6.3px;line-height:7.56px;color:#1d63a8;font-weight:bold;transform:scaleX(1.0702);transform-origin:50% 50%;">2039</span>
<span style="left:882.63px;top:123.99px;font-size:6.6px;line-height:7.92px;color:#3a8545;transform:scaleX(0.9535);transform-origin:100% 50%;">7</span>
<span style="left:882.63px;top:136.49px;font-size:6.6px;line-height:7.92px;color:#3a8545;transform:scaleX(0.9535);transform-origin:100% 50%;">2</span>
<span style="left:882.63px;top:148.99px;font-size:6.6px;line-height:7.92px;color:#3a8545;transform:scaleX(0.9535);transform-origin:100% 50%;">6</span>
<span style="left:882.63px;top:161.49px;font-size:6.6px;line-height:7.92px;color:#3a8545;transform:scaleX(0.9535);transform-origin:100% 50%;">3</span>
<span style="left:882.63px;top:173.99px;font-size:6.6px;line-height:7.92px;color:#3a8545;transform:scaleX(0.9535);transform-origin:100% 50%;">1</span>
<span style="left:882.63px;top:186.49px;font-size:6.6px;line-height:7.92px;color:#3a8545;transform:scaleX(0.9535);transform-origin:100% 50%;">5</span>
<span style="left:883.64px;top:199.23px;font-size:6.2px;line-height:7.44px;color:#9fb35a;">-</span>
<span style="left:883.64px;top:211.73px;font-size:6.2px;line-height:7.44px;color:#9fb35a;">-</span>
<span style="left:883.64px;top:224.23px;font-size:6.2px;line-height:7.44px;color:#9fb35a;">-</span>
<span style="left:883.64px;top:236.73px;font-size:6.2px;line-height:7.44px;color:#9fb35a;">-</span>
<span style="left:883.64px;top:249.23px;font-size:6.2px;line-height:7.44px;color:#9fb35a;">-</span>
<span style="left:883.64px;top:261.73px;font-size:6.2px;line-height:7.44px;color:#9fb35a;">-</span>
<span style="left:883.64px;top:274.23px;font-size:6.2px;line-height:7.44px;color:#9fb35a;">-</span>
<span style="left:883.64px;top:286.73px;font-size:6.2px;line-height:7.44px;color:#9fb35a;">-</span>
<span style="left:883.64px;top:299.23px;font-size:6.2px;line-height:7.44px;color:#9fb35a;">-</span>
<span style="left:883.64px;top:311.73px;font-size:6.2px;line-height:7.44px;color:#9fb35a;">-</span>
<span style="left:883.64px;top:324.23px;font-size:6.2px;line-height:7.44px;color:#9fb35a;">-</span>
<span style="left:883.64px;top:336.73px;font-size:6.2px;line-height:7.44px;color:#9fb35a;">-</span>
<span style="left:864.35px;top:348.82px;font-size:6.3px;line-height:7.56px;color:#1d63a8;font-weight:bold;transform:scaleX(0.9704);transform-origin:50% 50%;">24</span>
<span style="left:904.84px;top:109.42px;font-size:6.3px;line-height:7.56px;color:#1d63a8;font-weight:bold;transform:scaleX(1.0702);transform-origin:50% 50%;">2040</span>
<span style="left:904.84px;top:397.12px;font-size:6.3px;line-height:7.56px;color:#1d63a8;font-weight:bold;transform:scaleX(1.0702);transform-origin:50% 50%;">2040</span>
<span style="left:926.33px;top:123.99px;font-size:6.6px;line-height:7.92px;color:#3a8545;transform:scaleX(0.9535);transform-origin:100% 50%;">7</span>
<span style="left:926.33px;top:136.49px;font-size:6.6px;line-height:7.92px;color:#3a8545;transform:scaleX(0.9535);transform-origin:100% 50%;">2</span>
<span style="left:926.33px;top:148.99px;font-size:6.6px;line-height:7.92px;color:#3a8545;transform:scaleX(0.9535);transform-origin:100% 50%;">6</span>
<span style="left:926.33px;top:161.49px;font-size:6.6px;line-height:7.92px;color:#3a8545;transform:scaleX(0.9535);transform-origin:100% 50%;">3</span>
<span style="left:926.33px;top:173.99px;font-size:6.6px;line-height:7.92px;color:#3a8545;transform:scaleX(0.9535);transform-origin:100% 50%;">1</span>
<span style="left:926.33px;top:186.49px;font-size:6.6px;line-height:7.92px;color:#3a8545;transform:scaleX(0.9535);transform-origin:100% 50%;">5</span>
<span style="left:927.34px;top:199.23px;font-size:6.2px;line-height:7.44px;color:#9fb35a;">-</span>
<span style="left:927.34px;top:211.73px;font-size:6.2px;line-height:7.44px;color:#9fb35a;">-</span>
<span style="left:927.34px;top:224.23px;font-size:6.2px;line-height:7.44px;color:#9fb35a;">-</span>
<span style="left:927.34px;top:236.73px;font-size:6.2px;line-height:7.44px;color:#9fb35a;">-</span>
<span style="left:927.34px;top:249.23px;font-size:6.2px;line-height:7.44px;color:#9fb35a;">-</span>
<span style="left:927.34px;top:261.73px;font-size:6.2px;line-height:7.44px;color:#9fb35a;">-</span>
<span style="left:927.34px;top:274.23px;font-size:6.2px;line-height:7.44px;color:#9fb35a;">-</span>
<span style="left:927.34px;top:286.73px;font-size:6.2px;line-height:7.44px;color:#9fb35a;">-</span>
<span style="left:927.34px;top:299.23px;font-size:6.2px;line-height:7.44px;color:#9fb35a;">-</span>
<span style="left:927.34px;top:311.73px;font-size:6.2px;line-height:7.44px;color:#9fb35a;">-</span>
<span style="left:927.34px;top:324.23px;font-size:6.2px;line-height:7.44px;color:#9fb35a;">-</span>
<span style="left:927.34px;top:336.73px;font-size:6.2px;line-height:7.44px;color:#9fb35a;">-</span>
<span style="left:908.05px;top:348.82px;font-size:6.3px;line-height:7.56px;color:#1d63a8;font-weight:bold;transform:scaleX(0.9704);transform-origin:50% 50%;">24</span>
<span style="left:948.54px;top:109.42px;font-size:6.3px;line-height:7.56px;color:#1d63a8;font-weight:bold;transform:scaleX(1.0702);transform-origin:50% 50%;">2041</span>
<span style="left:948.54px;top:397.12px;font-size:6.3px;line-height:7.56px;color:#1d63a8;font-weight:bold;transform:scaleX(1.0702);transform-origin:50% 50%;">2041</span>
<span style="left:970.03px;top:123.99px;font-size:6.6px;line-height:7.92px;color:#3a8545;transform:scaleX(0.9535);transform-origin:100% 50%;">7</span>
<span style="left:970.03px;top:136.49px;font-size:6.6px;line-height:7.92px;color:#3a8545;transform:scaleX(0.9535);transform-origin:100% 50%;">2</span>
<span style="left:970.03px;top:148.99px;font-size:6.6px;line-height:7.92px;color:#3a8545;transform:scaleX(0.9535);transform-origin:100% 50%;">6</span>
<span style="left:970.03px;top:161.49px;font-size:6.6px;line-height:7.92px;color:#3a8545;transform:scaleX(0.9535);transform-origin:100% 50%;">3</span>
<span style="left:970.03px;top:173.99px;font-size:6.6px;line-height:7.92px;color:#3a8545;transform:scaleX(0.9535);transform-origin:100% 50%;">1</span>
<span style="left:970.03px;top:186.49px;font-size:6.6px;line-height:7.92px;color:#3a8545;transform:scaleX(0.9535);transform-origin:100% 50%;">5</span>
<span style="left:971.04px;top:199.23px;font-size:6.2px;line-height:7.44px;color:#9fb35a;">-</span>
<span style="left:971.04px;top:211.73px;font-size:6.2px;line-height:7.44px;color:#9fb35a;">-</span>
<span style="left:971.04px;top:224.23px;font-size:6.2px;line-height:7.44px;color:#9fb35a;">-</span>
<span style="left:971.04px;top:236.73px;font-size:6.2px;line-height:7.44px;color:#9fb35a;">-</span>
<span style="left:971.04px;top:249.23px;font-size:6.2px;line-height:7.44px;color:#9fb35a;">-</span>
<span style="left:971.04px;top:261.73px;font-size:6.2px;line-height:7.44px;color:#9fb35a;">-</span>
<span style="left:971.04px;top:274.23px;font-size:6.2px;line-height:7.44px;color:#9fb35a;">-</span>
<span style="left:971.04px;top:286.73px;font-size:6.2px;line-height:7.44px;color:#9fb35a;">-</span>
<span style="left:971.04px;top:299.23px;font-size:6.2px;line-height:7.44px;color:#9fb35a;">-</span>
<span style="left:971.04px;top:311.73px;font-size:6.2px;line-height:7.44px;color:#9fb35a;">-</span>
<span style="left:971.04px;top:324.23px;font-size:6.2px;line-height:7.44px;color:#9fb35a;">-</span>
<span style="left:971.04px;top:336.73px;font-size:6.2px;line-height:7.44px;color:#9fb35a;">-</span>
<span style="left:951.75px;top:348.82px;font-size:6.3px;line-height:7.56px;color:#1d63a8;font-weight:bold;transform:scaleX(0.9704);transform-origin:50% 50%;">24</span>
<span style="left:40.80px;top:409.08px;font-size:6.2px;line-height:7.44px;color:#1d63a8;font-weight:bold;transform:scaleX(0.9362);transform-origin:0 50%;">Categories</span>
<div style="left:39.30px;top:418.20px;width:117.00px;height:160.00px;background:#fefd90;box-shadow:inset 0 0 0 0.8px rgba(140,140,70,0.45);"></div>
<span style="left:42.80px;top:421.23px;font-size:6.2px;line-height:7.44px;color:#3a8545;transform:scaleX(0.9850);transform-origin:0 50%;">HR Placeholder 1</span>
<span style="left:42.80px;top:433.73px;font-size:6.2px;line-height:7.44px;color:#3a8545;transform:scaleX(0.9850);transform-origin:0 50%;">HR Placeholder 2</span>
<span style="left:42.80px;top:446.23px;font-size:6.2px;line-height:7.44px;color:#3a8545;transform:scaleX(0.9850);transform-origin:0 50%;">HR Placeholder 3</span>
<span style="left:42.80px;top:458.73px;font-size:6.2px;line-height:7.44px;color:#3a8545;transform:scaleX(0.9850);transform-origin:0 50%;">HR Placeholder 4</span>
<span style="left:42.80px;top:471.23px;font-size:6.2px;line-height:7.44px;color:#3a8545;transform:scaleX(0.9850);transform-origin:0 50%;">HR Placeholder 5</span>
<span style="left:42.80px;top:483.73px;font-size:6.2px;line-height:7.44px;color:#3a8545;transform:scaleX(0.9850);transform-origin:0 50%;">HR Placeholder 6</span>
<span style="left:42.80px;top:496.23px;font-size:6.2px;line-height:7.44px;color:#3a8545;transform:scaleX(0.9850);transform-origin:0 50%;">HR Placeholder 7</span>
<span style="left:42.80px;top:508.73px;font-size:6.2px;line-height:7.44px;color:#3a8545;transform:scaleX(0.9850);transform-origin:0 50%;">HR Placeholder 8</span>
<span style="left:42.80px;top:521.23px;font-size:6.2px;line-height:7.44px;color:#3a8545;transform:scaleX(0.9850);transform-origin:0 50%;">HR Placeholder 9</span>
<span style="left:42.80px;top:533.73px;font-size:6.2px;line-height:7.44px;color:#3a8545;transform:scaleX(0.9850);transform-origin:0 50%;">HR Placeholder 10</span>
<span style="left:42.80px;top:546.23px;font-size:6.2px;line-height:7.44px;color:#3a8545;transform:scaleX(0.9850);transform-origin:0 50%;">HR Placeholder 11</span>
<span style="left:42.80px;top:558.73px;font-size:6.2px;line-height:7.44px;color:#3a8545;transform:scaleX(0.9850);transform-origin:0 50%;">HR Placeholder 12</span>
<span style="left:236.00px;top:381.92px;font-size:9.8px;line-height:11.76px;color:#1d63a8;font-weight:bold;transform:scaleX(0.9180);transform-origin:0 50%;">Annual Salary</span>
<div style="left:234.00px;top:393.60px;width:752.50px;height:0.90px;background:#d8d8d8;"></div>
<div style="left:233.20px;top:418.20px;width:754.40px;height:160.00px;background:#d9d9d9;"></div>
<div style="left:233.20px;top:418.00px;width:754.40px;height:1.00px;background:#cbcbcb;"></div>
<div style="left:234.00px;top:430.70px;width:753.60px;height:1.00px;background:#e6e6e6;"></div>
<div style="left:234.00px;top:443.20px;width:753.60px;height:1.00px;background:#e6e6e6;"></div>
<div style="left:234.00px;top:455.70px;width:753.60px;height:1.00px;background:#e6e6e6;"></div>
<div style="left:234.00px;top:468.20px;width:753.60px;height:1.00px;background:#e6e6e6;"></div>
<div style="left:234.00px;top:480.70px;width:753.60px;height:1.00px;background:#e6e6e6;"></div>
<div style="left:234.00px;top:493.20px;width:753.60px;height:1.00px;background:#e6e6e6;"></div>
<div style="left:234.00px;top:505.70px;width:753.60px;height:1.00px;background:#e6e6e6;"></div>
<div style="left:234.00px;top:518.20px;width:753.60px;height:1.00px;background:#e6e6e6;"></div>
<div style="left:234.00px;top:530.70px;width:753.60px;height:1.00px;background:#e6e6e6;"></div>
<div style="left:234.00px;top:543.20px;width:753.60px;height:1.00px;background:#e6e6e6;"></div>
<div style="left:234.00px;top:555.70px;width:753.60px;height:1.00px;background:#e6e6e6;"></div>
<div style="left:276.90px;top:418.00px;width:1.60px;height:160.00px;background:#e5e5e5;"></div>
<div style="left:320.60px;top:418.00px;width:1.60px;height:160.00px;background:#e5e5e5;"></div>
<div style="left:364.30px;top:418.00px;width:1.60px;height:160.00px;background:#e5e5e5;"></div>
<div style="left:408.00px;top:418.00px;width:1.60px;height:160.00px;background:#e5e5e5;"></div>
<div style="left:451.70px;top:418.00px;width:1.60px;height:160.00px;background:#e5e5e5;"></div>
<div style="left:495.40px;top:418.00px;width:1.60px;height:160.00px;background:#e5e5e5;"></div>
<div style="left:539.10px;top:418.00px;width:1.60px;height:160.00px;background:#e5e5e5;"></div>
<div style="left:582.80px;top:418.00px;width:1.60px;height:160.00px;background:#e5e5e5;"></div>
<div style="left:626.50px;top:418.00px;width:1.60px;height:160.00px;background:#e5e5e5;"></div>
<div style="left:670.20px;top:418.00px;width:1.60px;height:160.00px;background:#e5e5e5;"></div>
<div style="left:713.90px;top:418.00px;width:1.60px;height:160.00px;background:#e5e5e5;"></div>
<div style="left:757.60px;top:418.00px;width:1.60px;height:160.00px;background:#e5e5e5;"></div>
<div style="left:801.30px;top:418.00px;width:1.60px;height:160.00px;background:#e5e5e5;"></div>
<div style="left:845.00px;top:418.00px;width:1.60px;height:160.00px;background:#e5e5e5;"></div>
<div style="left:888.70px;top:418.00px;width:1.60px;height:160.00px;background:#e5e5e5;"></div>
<div style="left:932.40px;top:418.00px;width:1.60px;height:160.00px;background:#e5e5e5;"></div>
<div style="left:976.10px;top:418.00px;width:1.60px;height:160.00px;background:#e5e5e5;"></div>
<span style="left:254.01px;top:421.23px;font-size:6.2px;line-height:7.44px;color:#2f6db0;transform:scaleX(1.0739);transform-origin:100% 50%;">(35,000)</span>
<span style="left:254.01px;top:433.73px;font-size:6.2px;line-height:7.44px;color:#2f6db0;transform:scaleX(1.0739);transform-origin:100% 50%;">(50,000)</span>
<span style="left:254.01px;top:446.23px;font-size:6.2px;line-height:7.44px;color:#2f6db0;transform:scaleX(1.0739);transform-origin:100% 50%;">(35,000)</span>
<span style="left:254.01px;top:458.73px;font-size:6.2px;line-height:7.44px;color:#2f6db0;transform:scaleX(1.0739);transform-origin:100% 50%;">(50,000)</span>
<span style="left:254.01px;top:471.23px;font-size:6.2px;line-height:7.44px;color:#2f6db0;transform:scaleX(1.0739);transform-origin:100% 50%;">(70,000)</span>
<span style="left:254.01px;top:483.73px;font-size:6.2px;line-height:7.44px;color:#2f6db0;transform:scaleX(1.0739);transform-origin:100% 50%;">(35,000)</span>
<span style="left:272.04px;top:495.93px;font-size:6.2px;line-height:7.44px;color:#a8a8a8;">-</span>
<span style="left:272.04px;top:508.43px;font-size:6.2px;line-height:7.44px;color:#a8a8a8;">-</span>
<span style="left:272.04px;top:520.93px;font-size:6.2px;line-height:7.44px;color:#a8a8a8;">-</span>
<span style="left:272.04px;top:533.43px;font-size:6.2px;line-height:7.44px;color:#a8a8a8;">-</span>
<span style="left:272.04px;top:545.93px;font-size:6.2px;line-height:7.44px;color:#a8a8a8;">-</span>
<span style="left:272.04px;top:558.43px;font-size:6.2px;line-height:7.44px;color:#a8a8a8;">-</span>
<span style="left:297.71px;top:421.23px;font-size:6.2px;line-height:7.44px;color:#2f6db0;transform:scaleX(1.0739);transform-origin:100% 50%;">(38,750)</span>
<span style="left:297.71px;top:433.73px;font-size:6.2px;line-height:7.44px;color:#2f6db0;transform:scaleX(1.0739);transform-origin:100% 50%;">(50,500)</span>
<span style="left:297.71px;top:446.23px;font-size:6.2px;line-height:7.44px;color:#2f6db0;transform:scaleX(1.0739);transform-origin:100% 50%;">(35,350)</span>
<span style="left:297.71px;top:458.73px;font-size:6.2px;line-height:7.44px;color:#2f6db0;transform:scaleX(1.0739);transform-origin:100% 50%;">(50,500)</span>
<span style="left:297.71px;top:471.23px;font-size:6.2px;line-height:7.44px;color:#2f6db0;transform:scaleX(1.0739);transform-origin:100% 50%;">(70,700)</span>
<span style="left:297.71px;top:483.73px;font-size:6.2px;line-height:7.44px;color:#2f6db0;transform:scaleX(1.0739);transform-origin:100% 50%;">(35,350)</span>
<span style="left:315.74px;top:495.93px;font-size:6.2px;line-height:7.44px;color:#a8a8a8;">-</span>
<span style="left:315.74px;top:508.43px;font-size:6.2px;line-height:7.44px;color:#a8a8a8;">-</span>
<span style="left:315.74px;top:520.93px;font-size:6.2px;line-height:7.44px;color:#a8a8a8;">-</span>
<span style="left:315.74px;top:533.43px;font-size:6.2px;line-height:7.44px;color:#a8a8a8;">-</span>
<span style="left:315.74px;top:545.93px;font-size:6.2px;line-height:7.44px;color:#a8a8a8;">-</span>
<span style="left:315.74px;top:558.43px;font-size:6.2px;line-height:7.44px;color:#a8a8a8;">-</span>
<span style="left:341.41px;top:421.23px;font-size:6.2px;line-height:7.44px;color:#2f6db0;transform:scaleX(1.0739);transform-origin:100% 50%;">(38,988)</span>
<span style="left:341.41px;top:433.73px;font-size:6.2px;line-height:7.44px;color:#2f6db0;transform:scaleX(1.0739);transform-origin:100% 50%;">(51,005)</span>
<span style="left:341.41px;top:446.23px;font-size:6.2px;line-height:7.44px;color:#2f6db0;transform:scaleX(1.0739);transform-origin:100% 50%;">(35,704)</span>
<span style="left:341.41px;top:458.73px;font-size:6.2px;line-height:7.44px;color:#2f6db0;transform:scaleX(1.0739);transform-origin:100% 50%;">(51,005)</span>
<span style="left:341.41px;top:471.23px;font-size:6.2px;line-height:7.44px;color:#2f6db0;transform:scaleX(1.0739);transform-origin:100% 50%;">(71,407)</span>
<span style="left:341.41px;top:483.73px;font-size:6.2px;line-height:7.44px;color:#2f6db0;transform:scaleX(1.0739);transform-origin:100% 50%;">(35,704)</span>
<span style="left:359.44px;top:495.93px;font-size:6.2px;line-height:7.44px;color:#a8a8a8;">-</span>
<span style="left:359.44px;top:508.43px;font-size:6.2px;line-height:7.44px;color:#a8a8a8;">-</span>
<span style="left:359.44px;top:520.93px;font-size:6.2px;line-height:7.44px;color:#a8a8a8;">-</span>
<span style="left:359.44px;top:533.43px;font-size:6.2px;line-height:7.44px;color:#a8a8a8;">-</span>
<span style="left:359.44px;top:545.93px;font-size:6.2px;line-height:7.44px;color:#a8a8a8;">-</span>
<span style="left:359.44px;top:558.43px;font-size:6.2px;line-height:7.44px;color:#a8a8a8;">-</span>
<span style="left:385.11px;top:421.23px;font-size:6.2px;line-height:7.44px;color:#2f6db0;transform:scaleX(1.0739);transform-origin:100% 50%;">(40,517)</span>
<span style="left:385.11px;top:433.73px;font-size:6.2px;line-height:7.44px;color:#2f6db0;transform:scaleX(1.0739);transform-origin:100% 50%;">(51,515)</span>
<span style="left:385.11px;top:446.23px;font-size:6.2px;line-height:7.44px;color:#2f6db0;transform:scaleX(1.0739);transform-origin:100% 50%;">(36,061)</span>
<span style="left:385.11px;top:458.73px;font-size:6.2px;line-height:7.44px;color:#2f6db0;transform:scaleX(1.0739);transform-origin:100% 50%;">(51,515)</span>
<span style="left:385.11px;top:471.23px;font-size:6.2px;line-height:7.44px;color:#2f6db0;transform:scaleX(1.0739);transform-origin:100% 50%;">(72,121)</span>
<span style="left:385.11px;top:483.73px;font-size:6.2px;line-height:7.44px;color:#2f6db0;transform:scaleX(1.0739);transform-origin:100% 50%;">(36,061)</span>
<span style="left:403.14px;top:495.93px;font-size:6.2px;line-height:7.44px;color:#a8a8a8;">-</span>
<span style="left:403.14px;top:508.43px;font-size:6.2px;line-height:7.44px;color:#a8a8a8;">-</span>
<span style="left:403.14px;top:520.93px;font-size:6.2px;line-height:7.44px;color:#a8a8a8;">-</span>
<span style="left:403.14px;top:533.43px;font-size:6.2px;line-height:7.44px;color:#a8a8a8;">-</span>
<span style="left:403.14px;top:545.93px;font-size:6.2px;line-height:7.44px;color:#a8a8a8;">-</span>
<span style="left:403.14px;top:558.43px;font-size:6.2px;line-height:7.44px;color:#a8a8a8;">-</span>
<span style="left:428.81px;top:421.23px;font-size:6.2px;line-height:7.44px;color:#2f6db0;transform:scaleX(1.0739);transform-origin:100% 50%;">(42,543)</span>
<span style="left:428.81px;top:433.73px;font-size:6.2px;line-height:7.44px;color:#2f6db0;transform:scaleX(1.0739);transform-origin:100% 50%;">(52,030)</span>
<span style="left:428.81px;top:446.23px;font-size:6.2px;line-height:7.44px;color:#2f6db0;transform:scaleX(1.0739);transform-origin:100% 50%;">(36,421)</span>
<span style="left:428.81px;top:458.73px;font-size:6.2px;line-height:7.44px;color:#2f6db0;transform:scaleX(1.0739);transform-origin:100% 50%;">(52,030)</span>
<span style="left:428.81px;top:471.23px;font-size:6.2px;line-height:7.44px;color:#2f6db0;transform:scaleX(1.0739);transform-origin:100% 50%;">(72,842)</span>
<span style="left:428.81px;top:483.73px;font-size:6.2px;line-height:7.44px;color:#2f6db0;transform:scaleX(1.0739);transform-origin:100% 50%;">(36,421)</span>
<span style="left:446.84px;top:495.93px;font-size:6.2px;line-height:7.44px;color:#a8a8a8;">-</span>
<span style="left:446.84px;top:508.43px;font-size:6.2px;line-height:7.44px;color:#a8a8a8;">-</span>
<span style="left:446.84px;top:520.93px;font-size:6.2px;line-height:7.44px;color:#a8a8a8;">-</span>
<span style="left:446.84px;top:533.43px;font-size:6.2px;line-height:7.44px;color:#a8a8a8;">-</span>
<span style="left:446.84px;top:545.93px;font-size:6.2px;line-height:7.44px;color:#a8a8a8;">-</span>
<span style="left:446.84px;top:558.43px;font-size:6.2px;line-height:7.44px;color:#a8a8a8;">-</span>
<span style="left:472.51px;top:421.23px;font-size:6.2px;line-height:7.44px;color:#2f6db0;transform:scaleX(1.0739);transform-origin:100% 50%;">(44,670)</span>
<span style="left:472.51px;top:433.73px;font-size:6.2px;line-height:7.44px;color:#2f6db0;transform:scaleX(1.0739);transform-origin:100% 50%;">(54,632)</span>
<span style="left:472.51px;top:446.23px;font-size:6.2px;line-height:7.44px;color:#2f6db0;transform:scaleX(1.0739);transform-origin:100% 50%;">(38,242)</span>
<span style="left:472.51px;top:458.73px;font-size:6.2px;line-height:7.44px;color:#2f6db0;transform:scaleX(1.0739);transform-origin:100% 50%;">(54,632)</span>
<span style="left:472.51px;top:471.23px;font-size:6.2px;line-height:7.44px;color:#2f6db0;transform:scaleX(1.0739);transform-origin:100% 50%;">(76,484)</span>
<span style="left:472.51px;top:483.73px;font-size:6.2px;line-height:7.44px;color:#2f6db0;transform:scaleX(1.0739);transform-origin:100% 50%;">(38,242)</span>
<span style="left:490.54px;top:495.93px;font-size:6.2px;line-height:7.44px;color:#a8a8a8;">-</span>
<span style="left:490.54px;top:508.43px;font-size:6.2px;line-height:7.44px;color:#a8a8a8;">-</span>
<span style="left:490.54px;top:520.93px;font-size:6.2px;line-height:7.44px;color:#a8a8a8;">-</span>
<span style="left:490.54px;top:533.43px;font-size:6.2px;line-height:7.44px;color:#a8a8a8;">-</span>
<span style="left:490.54px;top:545.93px;font-size:6.2px;line-height:7.44px;color:#a8a8a8;">-</span>
<span style="left:490.54px;top:558.43px;font-size:6.2px;line-height:7.44px;color:#a8a8a8;">-</span>
<span style="left:516.21px;top:421.23px;font-size:6.2px;line-height:7.44px;color:#2f6db0;transform:scaleX(1.0739);transform-origin:100% 50%;">(46,003)</span>
<span style="left:516.21px;top:433.73px;font-size:6.2px;line-height:7.44px;color:#2f6db0;transform:scaleX(1.0739);transform-origin:100% 50%;">(55,178)</span>
<span style="left:516.21px;top:446.23px;font-size:6.2px;line-height:7.44px;color:#2f6db0;transform:scaleX(1.0739);transform-origin:100% 50%;">(38,625)</span>
<span style="left:516.21px;top:458.73px;font-size:6.2px;line-height:7.44px;color:#2f6db0;transform:scaleX(1.0739);transform-origin:100% 50%;">(55,178)</span>
<span style="left:516.21px;top:471.23px;font-size:6.2px;line-height:7.44px;color:#2f6db0;transform:scaleX(1.0739);transform-origin:100% 50%;">(77,249)</span>
<span style="left:516.21px;top:483.73px;font-size:6.2px;line-height:7.44px;color:#2f6db0;transform:scaleX(1.0739);transform-origin:100% 50%;">(38,625)</span>
<span style="left:534.24px;top:495.93px;font-size:6.2px;line-height:7.44px;color:#a8a8a8;">-</span>
<span style="left:534.24px;top:508.43px;font-size:6.2px;line-height:7.44px;color:#a8a8a8;">-</span>
<span style="left:534.24px;top:520.93px;font-size:6.2px;line-height:7.44px;color:#a8a8a8;">-</span>
<span style="left:534.24px;top:533.43px;font-size:6.2px;line-height:7.44px;color:#a8a8a8;">-</span>
<span style="left:534.24px;top:545.93px;font-size:6.2px;line-height:7.44px;color:#a8a8a8;">-</span>
<span style="left:534.24px;top:558.43px;font-size:6.2px;line-height:7.44px;color:#a8a8a8;">-</span>
<span style="left:559.91px;top:421.23px;font-size:6.2px;line-height:7.44px;color:#2f6db0;transform:scaleX(1.0739);transform-origin:100% 50%;">(49,249)</span>
<span style="left:559.91px;top:433.73px;font-size:6.2px;line-height:7.44px;color:#2f6db0;transform:scaleX(1.0739);transform-origin:100% 50%;">(55,730)</span>
<span style="left:560.37px;top:446.23px;font-size:6.2px;line-height:7.44px;color:#2f6db0;transform:scaleX(1.0957);transform-origin:100% 50%;">(39,011)</span>
<span style="left:559.91px;top:458.73px;font-size:6.2px;line-height:7.44px;color:#2f6db0;transform:scaleX(1.0739);transform-origin:100% 50%;">(55,730)</span>
<span style="left:559.91px;top:471.23px;font-size:6.2px;line-height:7.44px;color:#2f6db0;transform:scaleX(1.0739);transform-origin:100% 50%;">(78,022)</span>
<span style="left:560.37px;top:483.73px;font-size:6.2px;line-height:7.44px;color:#2f6db0;transform:scaleX(1.0957);transform-origin:100% 50%;">(39,011)</span>
<span style="left:577.94px;top:495.93px;font-size:6.2px;line-height:7.44px;color:#a8a8a8;">-</span>
<span style="left:577.94px;top:508.43px;font-size:6.2px;line-height:7.44px;color:#a8a8a8;">-</span>
<span style="left:577.94px;top:520.93px;font-size:6.2px;line-height:7.44px;color:#a8a8a8;">-</span>
<span style="left:577.94px;top:533.43px;font-size:6.2px;line-height:7.44px;color:#a8a8a8;">-</span>
<span style="left:577.94px;top:545.93px;font-size:6.2px;line-height:7.44px;color:#a8a8a8;">-</span>
<span style="left:577.94px;top:558.43px;font-size:6.2px;line-height:7.44px;color:#a8a8a8;">-</span>
<span style="left:604.07px;top:421.23px;font-size:6.2px;line-height:7.44px;color:#2f6db0;transform:scaleX(1.0957);transform-origin:100% 50%;">(51,711)</span>
<span style="left:603.61px;top:433.73px;font-size:6.2px;line-height:7.44px;color:#2f6db0;transform:scaleX(1.0739);transform-origin:100% 50%;">(56,287)</span>
<span style="left:603.61px;top:446.23px;font-size:6.2px;line-height:7.44px;color:#2f6db0;transform:scaleX(1.0739);transform-origin:100% 50%;">(39,401)</span>
<span style="left:603.61px;top:458.73px;font-size:6.2px;line-height:7.44px;color:#2f6db0;transform:scaleX(1.0739);transform-origin:100% 50%;">(56,287)</span>
<span style="left:603.61px;top:471.23px;font-size:6.2px;line-height:7.44px;color:#2f6db0;transform:scaleX(1.0739);transform-origin:100% 50%;">(78,802)</span>
<span style="left:603.61px;top:483.73px;font-size:6.2px;line-height:7.44px;color:#2f6db0;transform:scaleX(1.0739);transform-origin:100% 50%;">(39,401)</span>
<span style="left:621.64px;top:495.93px;font-size:6.2px;line-height:7.44px;color:#a8a8a8;">-</span>
<span style="left:621.64px;top:508.43px;font-size:6.2px;line-height:7.44px;color:#a8a8a8;">-</span>
<span style="left:621.64px;top:520.93px;font-size:6.2px;line-height:7.44px;color:#a8a8a8;">-</span>
<span style="left:621.64px;top:533.43px;font-size:6.2px;line-height:7.44px;color:#a8a8a8;">-</span>
<span style="left:621.64px;top:545.93px;font-size:6.2px;line-height:7.44px;color:#a8a8a8;">-</span>
<span style="left:621.64px;top:558.43px;font-size:6.2px;line-height:7.44px;color:#a8a8a8;">-</span>
<span style="left:647.31px;top:421.23px;font-size:6.2px;line-height:7.44px;color:#2f6db0;transform:scaleX(1.0739);transform-origin:100% 50%;">(54,296)</span>
<span style="left:647.31px;top:433.73px;font-size:6.2px;line-height:7.44px;color:#2f6db0;transform:scaleX(1.0739);transform-origin:100% 50%;">(56,850)</span>
<span style="left:647.31px;top:446.23px;font-size:6.2px;line-height:7.44px;color:#2f6db0;transform:scaleX(1.0739);transform-origin:100% 50%;">(39,795)</span>
<span style="left:647.31px;top:458.73px;font-size:6.2px;line-height:7.44px;color:#2f6db0;transform:scaleX(1.0739);transform-origin:100% 50%;">(56,850)</span>
<span style="left:647.31px;top:471.23px;font-size:6.2px;line-height:7.44px;color:#2f6db0;transform:scaleX(1.0739);transform-origin:100% 50%;">(79,590)</span>
<span style="left:647.31px;top:483.73px;font-size:6.2px;line-height:7.44px;color:#2f6db0;transform:scaleX(1.0739);transform-origin:100% 50%;">(39,795)</span>
<span style="left:665.34px;top:495.93px;font-size:6.2px;line-height:7.44px;color:#a8a8a8;">-</span>
<span style="left:665.34px;top:508.43px;font-size:6.2px;line-height:7.44px;color:#a8a8a8;">-</span>
<span style="left:665.34px;top:520.93px;font-size:6.2px;line-height:7.44px;color:#a8a8a8;">-</span>
<span style="left:665.34px;top:533.43px;font-size:6.2px;line-height:7.44px;color:#a8a8a8;">-</span>
<span style="left:665.34px;top:545.93px;font-size:6.2px;line-height:7.44px;color:#a8a8a8;">-</span>
<span style="left:665.34px;top:558.43px;font-size:6.2px;line-height:7.44px;color:#a8a8a8;">-</span>
<span style="left:691.01px;top:421.23px;font-size:6.2px;line-height:7.44px;color:#2f6db0;transform:scaleX(1.0739);transform-origin:100% 50%;">(54,296)</span>
<span style="left:691.01px;top:433.73px;font-size:6.2px;line-height:7.44px;color:#2f6db0;transform:scaleX(1.0739);transform-origin:100% 50%;">(56,850)</span>
<span style="left:691.01px;top:446.23px;font-size:6.2px;line-height:7.44px;color:#2f6db0;transform:scaleX(1.0739);transform-origin:100% 50%;">(39,795)</span>
<span style="left:691.01px;top:458.73px;font-size:6.2px;line-height:7.44px;color:#2f6db0;transform:scaleX(1.0739);transform-origin:100% 50%;">(56,850)</span>
<span style="left:691.01px;top:471.23px;font-size:6.2px;line-height:7.44px;color:#2f6db0;transform:scaleX(1.0739);transform-origin:100% 50%;">(79,590)</span>
<span style="left:691.01px;top:483.73px;font-size:6.2px;line-height:7.44px;color:#2f6db0;transform:scaleX(1.0739);transform-origin:100% 50%;">(39,795)</span>
<span style="left:709.04px;top:495.93px;font-size:6.2px;line-height:7.44px;color:#a8a8a8;">-</span>
<span style="left:709.04px;top:508.43px;font-size:6.2px;line-height:7.44px;color:#a8a8a8;">-</span>
<span style="left:709.04px;top:520.93px;font-size:6.2px;line-height:7.44px;color:#a8a8a8;">-</span>
<span style="left:709.04px;top:533.43px;font-size:6.2px;line-height:7.44px;color:#a8a8a8;">-</span>
<span style="left:709.04px;top:545.93px;font-size:6.2px;line-height:7.44px;color:#a8a8a8;">-</span>
<span style="left:709.04px;top:558.43px;font-size:6.2px;line-height:7.44px;color:#a8a8a8;">-</span>
<span style="left:734.71px;top:421.23px;font-size:6.2px;line-height:7.44px;color:#2f6db0;transform:scaleX(1.0739);transform-origin:100% 50%;">(55,382)</span>
<span style="left:734.71px;top:433.73px;font-size:6.2px;line-height:7.44px;color:#2f6db0;transform:scaleX(1.0739);transform-origin:100% 50%;">(57,987)</span>
<span style="left:734.71px;top:446.23px;font-size:6.2px;line-height:7.44px;color:#2f6db0;transform:scaleX(1.0739);transform-origin:100% 50%;">(40,591)</span>
<span style="left:734.71px;top:458.73px;font-size:6.2px;line-height:7.44px;color:#2f6db0;transform:scaleX(1.0739);transform-origin:100% 50%;">(57,987)</span>
<span style="left:734.71px;top:471.23px;font-size:6.2px;line-height:7.44px;color:#2f6db0;transform:scaleX(1.0739);transform-origin:100% 50%;">(81,182)</span>
<span style="left:734.71px;top:483.73px;font-size:6.2px;line-height:7.44px;color:#2f6db0;transform:scaleX(1.0739);transform-origin:100% 50%;">(40,591)</span>
<span style="left:752.74px;top:495.93px;font-size:6.2px;line-height:7.44px;color:#a8a8a8;">-</span>
<span style="left:752.74px;top:508.43px;font-size:6.2px;line-height:7.44px;color:#a8a8a8;">-</span>
<span style="left:752.74px;top:520.93px;font-size:6.2px;line-height:7.44px;color:#a8a8a8;">-</span>
<span style="left:752.74px;top:533.43px;font-size:6.2px;line-height:7.44px;color:#a8a8a8;">-</span>
<span style="left:752.74px;top:545.93px;font-size:6.2px;line-height:7.44px;color:#a8a8a8;">-</span>
<span style="left:752.74px;top:558.43px;font-size:6.2px;line-height:7.44px;color:#a8a8a8;">-</span>
<span style="left:778.41px;top:421.23px;font-size:6.2px;line-height:7.44px;color:#2f6db0;transform:scaleX(1.0739);transform-origin:100% 50%;">(55,382)</span>
<span style="left:778.41px;top:433.73px;font-size:6.2px;line-height:7.44px;color:#2f6db0;transform:scaleX(1.0739);transform-origin:100% 50%;">(57,987)</span>
<span style="left:778.41px;top:446.23px;font-size:6.2px;line-height:7.44px;color:#2f6db0;transform:scaleX(1.0739);transform-origin:100% 50%;">(40,591)</span>
<span style="left:778.41px;top:458.73px;font-size:6.2px;line-height:7.44px;color:#2f6db0;transform:scaleX(1.0739);transform-origin:100% 50%;">(57,987)</span>
<span style="left:778.41px;top:471.23px;font-size:6.2px;line-height:7.44px;color:#2f6db0;transform:scaleX(1.0739);transform-origin:100% 50%;">(81,182)</span>
<span style="left:778.41px;top:483.73px;font-size:6.2px;line-height:7.44px;color:#2f6db0;transform:scaleX(1.0739);transform-origin:100% 50%;">(40,591)</span>
<span style="left:796.44px;top:495.93px;font-size:6.2px;line-height:7.44px;color:#a8a8a8;">-</span>
<span style="left:796.44px;top:508.43px;font-size:6.2px;line-height:7.44px;color:#a8a8a8;">-</span>
<span style="left:796.44px;top:520.93px;font-size:6.2px;line-height:7.44px;color:#a8a8a8;">-</span>
<span style="left:796.44px;top:533.43px;font-size:6.2px;line-height:7.44px;color:#a8a8a8;">-</span>
<span style="left:796.44px;top:545.93px;font-size:6.2px;line-height:7.44px;color:#a8a8a8;">-</span>
<span style="left:796.44px;top:558.43px;font-size:6.2px;line-height:7.44px;color:#a8a8a8;">-</span>
<span style="left:822.11px;top:421.23px;font-size:6.2px;line-height:7.44px;color:#2f6db0;transform:scaleX(1.0739);transform-origin:100% 50%;">(60,921)</span>
<span style="left:822.11px;top:433.73px;font-size:6.2px;line-height:7.44px;color:#2f6db0;transform:scaleX(1.0739);transform-origin:100% 50%;">(63,786)</span>
<span style="left:822.11px;top:446.23px;font-size:6.2px;line-height:7.44px;color:#2f6db0;transform:scaleX(1.0739);transform-origin:100% 50%;">(44,650)</span>
<span style="left:822.11px;top:458.73px;font-size:6.2px;line-height:7.44px;color:#2f6db0;transform:scaleX(1.0739);transform-origin:100% 50%;">(63,786)</span>
<span style="left:822.11px;top:471.23px;font-size:6.2px;line-height:7.44px;color:#2f6db0;transform:scaleX(1.0739);transform-origin:100% 50%;">(89,300)</span>
<span style="left:822.11px;top:483.73px;font-size:6.2px;line-height:7.44px;color:#2f6db0;transform:scaleX(1.0739);transform-origin:100% 50%;">(44,650)</span>
<span style="left:840.14px;top:495.93px;font-size:6.2px;line-height:7.44px;color:#a8a8a8;">-</span>
<span style="left:840.14px;top:508.43px;font-size:6.2px;line-height:7.44px;color:#a8a8a8;">-</span>
<span style="left:840.14px;top:520.93px;font-size:6.2px;line-height:7.44px;color:#a8a8a8;">-</span>
<span style="left:840.14px;top:533.43px;font-size:6.2px;line-height:7.44px;color:#a8a8a8;">-</span>
<span style="left:840.14px;top:545.93px;font-size:6.2px;line-height:7.44px;color:#a8a8a8;">-</span>
<span style="left:840.14px;top:558.43px;font-size:6.2px;line-height:7.44px;color:#a8a8a8;">-</span>
<span style="left:865.81px;top:421.23px;font-size:6.2px;line-height:7.44px;color:#2f6db0;transform:scaleX(1.0739);transform-origin:100% 50%;">(60,921)</span>
<span style="left:865.81px;top:433.73px;font-size:6.2px;line-height:7.44px;color:#2f6db0;transform:scaleX(1.0739);transform-origin:100% 50%;">(63,786)</span>
<span style="left:865.81px;top:446.23px;font-size:6.2px;line-height:7.44px;color:#2f6db0;transform:scaleX(1.0739);transform-origin:100% 50%;">(44,650)</span>
<span style="left:865.81px;top:458.73px;font-size:6.2px;line-height:7.44px;color:#2f6db0;transform:scaleX(1.0739);transform-origin:100% 50%;">(63,786)</span>
<span style="left:865.81px;top:471.23px;font-size:6.2px;line-height:7.44px;color:#2f6db0;transform:scaleX(1.0739);transform-origin:100% 50%;">(89,300)</span>
<span style="left:865.81px;top:483.73px;font-size:6.2px;line-height:7.44px;color:#2f6db0;transform:scaleX(1.0739);transform-origin:100% 50%;">(44,650)</span>
<span style="left:883.84px;top:495.93px;font-size:6.2px;line-height:7.44px;color:#a8a8a8;">-</span>
<span style="left:883.84px;top:508.43px;font-size:6.2px;line-height:7.44px;color:#a8a8a8;">-</span>
<span style="left:883.84px;top:520.93px;font-size:6.2px;line-height:7.44px;color:#a8a8a8;">-</span>
<span style="left:883.84px;top:533.43px;font-size:6.2px;line-height:7.44px;color:#a8a8a8;">-</span>
<span style="left:883.84px;top:545.93px;font-size:6.2px;line-height:7.44px;color:#a8a8a8;">-</span>
<span style="left:883.84px;top:558.43px;font-size:6.2px;line-height:7.44px;color:#a8a8a8;">-</span>
<span style="left:909.51px;top:421.23px;font-size:6.2px;line-height:7.44px;color:#2f6db0;transform:scaleX(1.0739);transform-origin:100% 50%;">(60,921)</span>
<span style="left:909.51px;top:433.73px;font-size:6.2px;line-height:7.44px;color:#2f6db0;transform:scaleX(1.0739);transform-origin:100% 50%;">(63,786)</span>
<span style="left:909.51px;top:446.23px;font-size:6.2px;line-height:7.44px;color:#2f6db0;transform:scaleX(1.0739);transform-origin:100% 50%;">(44,650)</span>
<span style="left:909.51px;top:458.73px;font-size:6.2px;line-height:7.44px;color:#2f6db0;transform:scaleX(1.0739);transform-origin:100% 50%;">(63,786)</span>
<span style="left:909.51px;top:471.23px;font-size:6.2px;line-height:7.44px;color:#2f6db0;transform:scaleX(1.0739);transform-origin:100% 50%;">(89,300)</span>
<span style="left:909.51px;top:483.73px;font-size:6.2px;line-height:7.44px;color:#2f6db0;transform:scaleX(1.0739);transform-origin:100% 50%;">(44,650)</span>
<span style="left:927.54px;top:495.93px;font-size:6.2px;line-height:7.44px;color:#a8a8a8;">-</span>
<span style="left:927.54px;top:508.43px;font-size:6.2px;line-height:7.44px;color:#a8a8a8;">-</span>
<span style="left:927.54px;top:520.93px;font-size:6.2px;line-height:7.44px;color:#a8a8a8;">-</span>
<span style="left:927.54px;top:533.43px;font-size:6.2px;line-height:7.44px;color:#a8a8a8;">-</span>
<span style="left:927.54px;top:545.93px;font-size:6.2px;line-height:7.44px;color:#a8a8a8;">-</span>
<span style="left:927.54px;top:558.43px;font-size:6.2px;line-height:7.44px;color:#a8a8a8;">-</span>
<span style="left:953.21px;top:421.23px;font-size:6.2px;line-height:7.44px;color:#2f6db0;transform:scaleX(1.0739);transform-origin:100% 50%;">(60,921)</span>
<span style="left:953.21px;top:433.73px;font-size:6.2px;line-height:7.44px;color:#2f6db0;transform:scaleX(1.0739);transform-origin:100% 50%;">(63,786)</span>
<span style="left:953.21px;top:446.23px;font-size:6.2px;line-height:7.44px;color:#2f6db0;transform:scaleX(1.0739);transform-origin:100% 50%;">(44,650)</span>
<span style="left:953.21px;top:458.73px;font-size:6.2px;line-height:7.44px;color:#2f6db0;transform:scaleX(1.0739);transform-origin:100% 50%;">(63,786)</span>
<span style="left:953.21px;top:471.23px;font-size:6.2px;line-height:7.44px;color:#2f6db0;transform:scaleX(1.0739);transform-origin:100% 50%;">(89,300)</span>
<span style="left:953.21px;top:483.73px;font-size:6.2px;line-height:7.44px;color:#2f6db0;transform:scaleX(1.0739);transform-origin:100% 50%;">(44,650)</span>
<span style="left:971.24px;top:495.93px;font-size:6.2px;line-height:7.44px;color:#a8a8a8;">-</span>
<span style="left:971.24px;top:508.43px;font-size:6.2px;line-height:7.44px;color:#a8a8a8;">-</span>
<span style="left:971.24px;top:520.93px;font-size:6.2px;line-height:7.44px;color:#a8a8a8;">-</span>
<span style="left:971.24px;top:533.43px;font-size:6.2px;line-height:7.44px;color:#a8a8a8;">-</span>
<span style="left:971.24px;top:545.93px;font-size:6.2px;line-height:7.44px;color:#a8a8a8;">-</span>
<span style="left:971.24px;top:558.43px;font-size:6.2px;line-height:7.44px;color:#a8a8a8;">-</span>
<div style="left:987.60px;top:50.60px;width:12.50px;height:508.40px;background:#f1f1f3;"></div>
<div style="left:991.20px;top:62.80px;width:5.40px;height:161.00px;background:#707070;border-radius:2.7px;"></div>
<svg style="left:989px;top:53px" width="10" height="8" viewBox="0 0 10 8"><path d="M2.4 5.6 L5 2.2 L7.6 5.6 Z" fill="#7a7a7a"/></svg>
<svg style="left:989px;top:549.5px" width="10" height="8" viewBox="0 0 10 8"><path d="M1.6 1.8 L5 6.2 L8.4 1.8 Z" fill="#505050"/></svg>
<div style="left:0.00px;top:50.60px;width:17.20px;height:508.40px;background:#f2f2f2;"></div>
<div style="left:16.60px;top:63.50px;width:0.90px;height:495.50px;background:#cdcdcd;"></div>
<span style="left:6.16px;top:62.55px;font-size:9.5px;line-height:11.40px;color:#333333;transform:scaleX(0.9085);transform-origin:50% 50%;">1</span>
<div style="left:0.00px;top:73.60px;width:17.20px;height:0.80px;background:#d9d9d9;"></div>
<span style="left:6.16px;top:76.55px;font-size:9.5px;line-height:11.40px;color:#333333;transform:scaleX(0.9085);transform-origin:50% 50%;">2</span>
<div style="left:0.00px;top:91.10px;width:17.20px;height:0.80px;background:#d9d9d9;"></div>
<span style="left:6.16px;top:91.55px;font-size:9.5px;line-height:11.40px;color:#333333;transform:scaleX(0.9085);transform-origin:50% 50%;">3</span>
<div style="left:0.00px;top:103.60px;width:17.20px;height:0.80px;background:#d9d9d9;"></div>
<span style="left:6.16px;top:106.30px;font-size:9.5px;line-height:11.40px;color:#333333;transform:scaleX(0.9085);transform-origin:50% 50%;">4</span>
<div style="left:0.00px;top:120.60px;width:17.20px;height:0.80px;background:#d9d9d9;"></div>
<span style="left:6.16px;top:121.05px;font-size:9.5px;line-height:11.40px;color:#333333;transform:scaleX(0.9085);transform-origin:50% 50%;">5</span>
<div style="left:0.00px;top:133.10px;width:17.20px;height:0.80px;background:#d9d9d9;"></div>
<span style="left:6.16px;top:133.55px;font-size:9.5px;line-height:11.40px;color:#333333;transform:scaleX(0.9085);transform-origin:50% 50%;">6</span>
<div style="left:0.00px;top:145.60px;width:17.20px;height:0.80px;background:#d9d9d9;"></div>
<span style="left:6.16px;top:146.05px;font-size:9.5px;line-height:11.40px;color:#333333;transform:scaleX(0.9085);transform-origin:50% 50%;">7</span>
<div style="left:0.00px;top:158.10px;width:17.20px;height:0.80px;background:#d9d9d9;"></div>
<span style="left:6.16px;top:158.55px;font-size:9.5px;line-height:11.40px;color:#333333;transform:scaleX(0.9085);transform-origin:50% 50%;">8</span>
<div style="left:0.00px;top:170.60px;width:17.20px;height:0.80px;background:#d9d9d9;"></div>
<span style="left:6.16px;top:171.05px;font-size:9.5px;line-height:11.40px;color:#333333;transform:scaleX(0.9085);transform-origin:50% 50%;">9</span>
<div style="left:0.00px;top:183.10px;width:17.20px;height:0.80px;background:#d9d9d9;"></div>
<span style="left:3.92px;top:183.55px;font-size:9.5px;line-height:11.40px;color:#333333;transform:scaleX(0.8517);transform-origin:50% 50%;">10</span>
<div style="left:0.00px;top:195.60px;width:17.20px;height:0.80px;background:#d9d9d9;"></div>
<span style="left:4.27px;top:196.05px;font-size:9.5px;line-height:11.40px;color:#333333;transform:scaleX(0.9126);transform-origin:50% 50%;">11</span>
<div style="left:0.00px;top:208.10px;width:17.20px;height:0.80px;background:#d9d9d9;"></div>
<span style="left:3.92px;top:208.55px;font-size:9.5px;line-height:11.40px;color:#333333;transform:scaleX(0.8517);transform-origin:50% 50%;">12</span>
<div style="left:0.00px;top:220.60px;width:17.20px;height:0.80px;background:#d9d9d9;"></div>
<span style="left:3.92px;top:221.05px;font-size:9.5px;line-height:11.40px;color:#333333;transform:scaleX(0.8517);transform-origin:50% 50%;">13</span>
<div style="left:0.00px;top:233.10px;width:17.20px;height:0.80px;background:#d9d9d9;"></div>
<span style="left:3.92px;top:233.55px;font-size:9.5px;line-height:11.40px;color:#333333;transform:scaleX(0.8517);transform-origin:50% 50%;">14</span>
<div style="left:0.00px;top:245.60px;width:17.20px;height:0.80px;background:#d9d9d9;"></div>
<span style="left:3.92px;top:246.05px;font-size:9.5px;line-height:11.40px;color:#333333;transform:scaleX(0.8517);transform-origin:50% 50%;">15</span>
<div style="left:0.00px;top:258.10px;width:17.20px;height:0.80px;background:#d9d9d9;"></div>
<span style="left:3.92px;top:258.55px;font-size:9.5px;line-height:11.40px;color:#333333;transform:scaleX(0.8517);transform-origin:50% 50%;">16</span>
<div style="left:0.00px;top:270.60px;width:17.20px;height:0.80px;background:#d9d9d9;"></div>
<span style="left:3.92px;top:271.05px;font-size:9.5px;line-height:11.40px;color:#333333;transform:scaleX(0.8517);transform-origin:50% 50%;">17</span>
<div style="left:0.00px;top:283.10px;width:17.20px;height:0.80px;background:#d9d9d9;"></div>
<span style="left:3.92px;top:283.55px;font-size:9.5px;line-height:11.40px;color:#333333;transform:scaleX(0.8517);transform-origin:50% 50%;">18</span>
<div style="left:0.00px;top:295.60px;width:17.20px;height:0.80px;background:#d9d9d9;"></div>
<span style="left:3.92px;top:296.05px;font-size:9.5px;line-height:11.40px;color:#333333;transform:scaleX(0.8517);transform-origin:50% 50%;">19</span>
<div style="left:0.00px;top:308.10px;width:17.20px;height:0.80px;background:#d9d9d9;"></div>
<span style="left:3.92px;top:308.55px;font-size:9.5px;line-height:11.40px;color:#333333;transform:scaleX(0.8517);transform-origin:50% 50%;">20</span>
<div style="left:0.00px;top:320.60px;width:17.20px;height:0.80px;background:#d9d9d9;"></div>
<span style="left:3.92px;top:321.05px;font-size:9.5px;line-height:11.40px;color:#333333;transform:scaleX(0.8517);transform-origin:50% 50%;">21</span>
<div style="left:0.00px;top:333.10px;width:17.20px;height:0.80px;background:#d9d9d9;"></div>
<span style="left:3.92px;top:333.55px;font-size:9.5px;line-height:11.40px;color:#333333;transform:scaleX(0.8517);transform-origin:50% 50%;">22</span>
<div style="left:0.00px;top:345.60px;width:17.20px;height:0.80px;background:#d9d9d9;"></div>
<span style="left:3.92px;top:345.80px;font-size:9.5px;line-height:11.40px;color:#333333;transform:scaleX(0.8517);transform-origin:50% 50%;">23</span>
<div style="left:0.00px;top:357.60px;width:17.20px;height:0.80px;background:#d9d9d9;"></div>
<span style="left:3.92px;top:355.25px;font-size:9.5px;line-height:11.40px;color:#333333;transform:scaleX(0.8517);transform-origin:50% 50%;">24</span>
<div style="left:0.00px;top:365.90px;width:17.20px;height:0.80px;background:#d9d9d9;"></div>
<span style="left:3.92px;top:367.70px;font-size:9.5px;line-height:11.40px;color:#333333;transform:scaleX(0.8517);transform-origin:50% 50%;">25</span>
<div style="left:0.00px;top:381.10px;width:17.20px;height:0.80px;background:#d9d9d9;"></div>
<span style="left:3.92px;top:382.05px;font-size:9.5px;line-height:11.40px;color:#333333;transform:scaleX(0.8517);transform-origin:50% 50%;">26</span>
<div style="left:0.00px;top:394.60px;width:17.20px;height:0.80px;background:#d9d9d9;"></div>
<span style="left:3.92px;top:394.30px;font-size:9.5px;line-height:11.40px;color:#333333;transform:scaleX(0.8517);transform-origin:50% 50%;">27</span>
<div style="left:0.00px;top:405.60px;width:17.20px;height:0.80px;background:#d9d9d9;"></div>
<span style="left:3.92px;top:405.80px;font-size:9.5px;line-height:11.40px;color:#333333;transform:scaleX(0.8517);transform-origin:50% 50%;">28</span>
<div style="left:0.00px;top:417.60px;width:17.20px;height:0.80px;background:#d9d9d9;"></div>
<span style="left:3.92px;top:418.05px;font-size:9.5px;line-height:11.40px;color:#333333;transform:scaleX(0.8517);transform-origin:50% 50%;">29</span>
<div style="left:0.00px;top:430.10px;width:17.20px;height:0.80px;background:#d9d9d9;"></div>
<span style="left:3.92px;top:430.55px;font-size:9.5px;line-height:11.40px;color:#333333;transform:scaleX(0.8517);transform-origin:50% 50%;">30</span>
<div style="left:0.00px;top:442.60px;width:17.20px;height:0.80px;background:#d9d9d9;"></div>
<span style="left:3.92px;top:443.05px;font-size:9.5px;line-height:11.40px;color:#333333;transform:scaleX(0.8517);transform-origin:50% 50%;">31</span>
<div style="left:0.00px;top:455.10px;width:17.20px;height:0.80px;background:#d9d9d9;"></div>
<span style="left:3.92px;top:455.55px;font-size:9.5px;line-height:11.40px;color:#333333;transform:scaleX(0.8517);transform-origin:50% 50%;">32</span>
<div style="left:0.00px;top:467.60px;width:17.20px;height:0.80px;background:#d9d9d9;"></div>
<span style="left:3.92px;top:468.05px;font-size:9.5px;line-height:11.40px;color:#333333;transform:scaleX(0.8517);transform-origin:50% 50%;">33</span>
<div style="left:0.00px;top:480.10px;width:17.20px;height:0.80px;background:#d9d9d9;"></div>
<span style="left:3.92px;top:480.55px;font-size:9.5px;line-height:11.40px;color:#333333;transform:scaleX(0.8517);transform-origin:50% 50%;">34</span>
<div style="left:0.00px;top:492.60px;width:17.20px;height:0.80px;background:#d9d9d9;"></div>
<span style="left:3.92px;top:493.05px;font-size:9.5px;line-height:11.40px;color:#333333;transform:scaleX(0.8517);transform-origin:50% 50%;">35</span>
<div style="left:0.00px;top:505.10px;width:17.20px;height:0.80px;background:#d9d9d9;"></div>
<span style="left:3.92px;top:505.55px;font-size:9.5px;line-height:11.40px;color:#333333;transform:scaleX(0.8517);transform-origin:50% 50%;">36</span>
<div style="left:0.00px;top:517.60px;width:17.20px;height:0.80px;background:#d9d9d9;"></div>
<span style="left:3.92px;top:518.05px;font-size:9.5px;line-height:11.40px;color:#333333;transform:scaleX(0.8517);transform-origin:50% 50%;">37</span>
<div style="left:0.00px;top:530.10px;width:17.20px;height:0.80px;background:#d9d9d9;"></div>
<span style="left:3.92px;top:530.55px;font-size:9.5px;line-height:11.40px;color:#333333;transform:scaleX(0.8517);transform-origin:50% 50%;">38</span>
<div style="left:0.00px;top:542.60px;width:17.20px;height:0.80px;background:#d9d9d9;"></div>
<span style="left:3.92px;top:543.05px;font-size:9.5px;line-height:11.40px;color:#333333;transform:scaleX(0.8517);transform-origin:50% 50%;">39</span>
<div style="left:0.00px;top:555.10px;width:17.20px;height:0.80px;background:#d9d9d9;"></div>
<div style="left:0.00px;top:50.60px;width:987.50px;height:13.00px;background:#efefef;"></div>
<div style="left:0.00px;top:63.20px;width:987.50px;height:0.80px;background:#cfcfcf;"></div>
<div style="left:192.00px;top:50.60px;width:42.00px;height:13.00px;background:#d8d8d8;"></div>
<div style="left:192.00px;top:61.60px;width:42.00px;height:1.80px;background:#4a946a;"></div>
<div style="left:22.10px;top:52.10px;width:0.80px;height:11.50px;background:#d6d6d6;"></div>
<span style="left:17.43px;top:53.02px;font-size:8.3px;line-height:9.96px;color:#333333;transform:scaleX(0.9031);transform-origin:50% 50%;">A</span>
<div style="left:29.60px;top:52.10px;width:0.80px;height:11.50px;background:#d6d6d6;"></div>
<span style="left:23.68px;top:53.02px;font-size:8.3px;line-height:9.96px;color:#333333;transform:scaleX(0.9031);transform-origin:50% 50%;">B</span>
<div style="left:39.60px;top:52.10px;width:0.80px;height:11.50px;background:#d6d6d6;"></div>
<span style="left:32.20px;top:53.02px;font-size:8.3px;line-height:9.96px;color:#333333;transform:scaleX(0.8341);transform-origin:50% 50%;">C</span>
<div style="left:69.60px;top:52.10px;width:0.80px;height:11.50px;background:#d6d6d6;"></div>
<span style="left:52.20px;top:53.02px;font-size:8.3px;line-height:9.96px;color:#333333;transform:scaleX(0.9009);transform-origin:50% 50%;">D</span>
<div style="left:99.60px;top:52.10px;width:0.80px;height:11.50px;background:#d6d6d6;"></div>
<span style="left:82.43px;top:53.02px;font-size:8.3px;line-height:9.96px;color:#333333;transform:scaleX(0.9754);transform-origin:50% 50%;">E</span>
<div style="left:119.60px;top:52.10px;width:0.80px;height:11.50px;background:#d6d6d6;"></div>
<span style="left:107.66px;top:53.02px;font-size:8.3px;line-height:9.96px;color:#333333;transform:scaleX(1.0651);transform-origin:50% 50%;">F</span>
<div style="left:155.10px;top:52.10px;width:0.80px;height:11.50px;background:#d6d6d6;"></div>
<span style="left:134.72px;top:53.02px;font-size:8.3px;line-height:9.96px;color:#333333;transform:scaleX(0.8365);transform-origin:50% 50%;">G</span>
<div style="left:191.60px;top:52.10px;width:0.80px;height:11.50px;background:#d6d6d6;"></div>
<span style="left:170.95px;top:53.02px;font-size:8.3px;line-height:9.96px;color:#333333;transform:scaleX(0.9009);transform-origin:50% 50%;">H</span>
<div style="left:233.60px;top:52.10px;width:0.80px;height:11.50px;background:#d6d6d6;"></div>
<span style="left:212.05px;top:53.02px;font-size:8.3px;line-height:9.96px;color:#333333;transform:scaleX(0.8674);transform-origin:50% 50%;">I</span>
<div style="left:277.30px;top:52.10px;width:0.80px;height:11.50px;background:#d6d6d6;"></div>
<span style="left:253.98px;top:53.02px;font-size:8.3px;line-height:9.96px;color:#333333;transform:scaleX(0.8193);transform-origin:50% 50%;">J</span>
<div style="left:321.00px;top:52.10px;width:0.80px;height:11.50px;background:#d6d6d6;"></div>
<span style="left:296.98px;top:53.02px;font-size:8.3px;line-height:9.96px;color:#333333;transform:scaleX(0.9754);transform-origin:50% 50%;">K</span>
<div style="left:364.70px;top:52.10px;width:0.80px;height:11.50px;background:#d6d6d6;"></div>
<span style="left:341.14px;top:53.02px;font-size:8.3px;line-height:9.96px;color:#333333;transform:scaleX(1.1698);transform-origin:50% 50%;">L</span>
<div style="left:408.40px;top:52.10px;width:0.80px;height:11.50px;background:#d6d6d6;"></div>
<span style="left:383.69px;top:53.02px;font-size:8.3px;line-height:9.96px;color:#333333;transform:scaleX(1.0702);transform-origin:50% 50%;">M</span>
<div style="left:452.10px;top:52.10px;width:0.80px;height:11.50px;background:#d6d6d6;"></div>
<span style="left:427.85px;top:53.02px;font-size:8.3px;line-height:9.96px;color:#333333;transform:scaleX(0.9009);transform-origin:50% 50%;">N</span>
<div style="left:495.80px;top:52.10px;width:0.80px;height:11.50px;background:#d6d6d6;"></div>
<span style="left:471.32px;top:53.02px;font-size:8.3px;line-height:9.96px;color:#333333;transform:scaleX(0.8365);transform-origin:50% 50%;">O</span>
<div style="left:539.50px;top:52.10px;width:0.80px;height:11.50px;background:#d6d6d6;"></div>
<span style="left:515.48px;top:53.02px;font-size:8.3px;line-height:9.96px;color:#333333;transform:scaleX(0.9754);transform-origin:50% 50%;">P</span>
<div style="left:583.20px;top:52.10px;width:0.80px;height:11.50px;background:#d6d6d6;"></div>
<span style="left:558.72px;top:53.02px;font-size:8.3px;line-height:9.96px;color:#333333;transform:scaleX(0.8365);transform-origin:50% 50%;">Q</span>
<div style="left:626.90px;top:52.10px;width:0.80px;height:11.50px;background:#d6d6d6;"></div>
<span style="left:602.65px;top:53.02px;font-size:8.3px;line-height:9.96px;color:#333333;transform:scaleX(0.9009);transform-origin:50% 50%;">R</span>
<div style="left:670.60px;top:52.10px;width:0.80px;height:11.50px;background:#d6d6d6;"></div>
<span style="left:646.58px;top:53.02px;font-size:8.3px;line-height:9.96px;color:#333333;transform:scaleX(0.9754);transform-origin:50% 50%;">S</span>
<div style="left:714.30px;top:52.10px;width:0.80px;height:11.50px;background:#d6d6d6;"></div>
<span style="left:690.51px;top:53.02px;font-size:8.3px;line-height:9.96px;color:#333333;transform:scaleX(1.0651);transform-origin:50% 50%;">T</span>
<div style="left:758.00px;top:52.10px;width:0.80px;height:11.50px;background:#d6d6d6;"></div>
<span style="left:733.75px;top:53.02px;font-size:8.3px;line-height:9.96px;color:#333333;transform:scaleX(0.9009);transform-origin:50% 50%;">U</span>
<div style="left:801.70px;top:52.10px;width:0.80px;height:11.50px;background:#d6d6d6;"></div>
<span style="left:777.68px;top:53.02px;font-size:8.3px;line-height:9.96px;color:#333333;transform:scaleX(0.9754);transform-origin:50% 50%;">V</span>
<div style="left:845.40px;top:52.10px;width:0.80px;height:11.50px;background:#d6d6d6;"></div>
<span style="left:820.23px;top:53.02px;font-size:8.3px;line-height:9.96px;color:#333333;transform:scaleX(1.0723);transform-origin:50% 50%;">W</span>
<div style="left:889.10px;top:52.10px;width:0.80px;height:11.50px;background:#d6d6d6;"></div>
<span style="left:865.08px;top:53.02px;font-size:8.3px;line-height:9.96px;color:#333333;transform:scaleX(0.9754);transform-origin:50% 50%;">X</span>
<div style="left:932.80px;top:52.10px;width:0.80px;height:11.50px;background:#d6d6d6;"></div>
<span style="left:908.78px;top:53.02px;font-size:8.3px;line-height:9.96px;color:#333333;transform:scaleX(0.9754);transform-origin:50% 50%;">Y</span>
<div style="left:976.50px;top:52.10px;width:0.80px;height:11.50px;background:#d6d6d6;"></div>
<span style="left:952.71px;top:53.02px;font-size:8.3px;line-height:9.96px;color:#333333;transform:scaleX(1.0651);transform-origin:50% 50%;">Z</span>
<div style="left:1020.20px;top:52.10px;width:0.80px;height:11.50px;background:#d6d6d6;"></div>
<svg style="left:0px;top:51px" width="18" height="13" viewBox="0 0 18 13"><path d="M15.8 3.2 L15.8 11 L8 11 Z" fill="#b5b5b5"/></svg>
<div style="left:0.00px;top:0.00px;width:1000.00px;height:31.00px;background:#107c41;"></div>
<div style="left:0.00px;top:24.50px;width:1000.00px;height:6.50px;background:linear-gradient(to bottom, rgba(0,0,0,0.09), rgba(0,0,0,0.03));"></div>
<div style="left:386.00px;top:5.40px;width:239.00px;height:20.20px;background:#d0e4d8;border-radius:1.5px;"></div>
<svg style="left:394px;top:9px" width="12" height="12" viewBox="0 0 12 12"><circle cx="7.2" cy="5" r="3.1" fill="none" stroke="#3a5a48" stroke-width="0.95"/><path d="M5 7.3 L1.4 10.9" stroke="#3a5a48" stroke-width="0.95" fill="none"/></svg>
<span style="left:412.50px;top:10.08px;font-size:8.7px;line-height:10.44px;color:#3f5f4d;">Search</span>
<span style="left:117.00px;top:11.34px;font-size:8.6px;line-height:10.32px;color:#ffffff;transform:scaleX(0.8786);transform-origin:0 50%;">EV Charging Station 20 Years Financial Model.xlsx  -  Excel</span>
<svg style="left:8px;top:6px" width="100" height="20" viewBox="0 0 100 20">
<g fill="none" stroke="#ffffff" stroke-width="1">
<rect x="5.6" y="4.6" width="7" height="10" rx="1" fill="#cfe6d8" stroke="#ffffff" stroke-width="0.9"/>
<path d="M8.6 7.4 H12 M8.6 9.6 H12 M8.6 11.8 H12 M10.3 5 V14.2" stroke="#3f9465" stroke-width="0.7"/>
<rect x="2.3" y="6.2" width="6" height="7.6" rx="0.7" fill="#ffffff" stroke="none"/>
<path d="M3.9 8.2 L6.7 11.8 M6.7 8.2 L3.9 11.8" stroke="#107c41" stroke-width="0.9"/>
<rect x="23.5" y="4.8" width="9.6" height="9.6" rx="1"/>
<path d="M25.8 4.8 V8.2 H30.8 V4.8 M25.6 14.4 V10.8 H31 V14.4"/>
<path d="M42.8 4.4 V8.4 H46.8" stroke-width="1.1"/>
<path d="M43 8.2 C44.6 5.2 49.6 4.6 51 7.8 C52.2 10.8 49 13.8 45.4 15.6" stroke-width="1.1"/>
<path d="M56.4 9.2 H59.6" stroke-width="0.9"/>
</g>
<g fill="none" stroke="#58a47e" stroke-width="1.1">
<path d="M74.6 5 V8.6 H71"/>
<path d="M74.4 8.4 C73 5.6 68.6 5 67.4 8 C66.4 10.6 69 13 71.6 14.4"/>
<path d="M82.2 9.2 H85" stroke-width="0.9"/>
</g>
<g stroke="#ffffff" stroke-width="0.9" fill="#ffffff">
<path d="M93 8.6 H98.4" fill="none"/>
<path d="M93 10.4 L98.4 10.4 L95.7 13.2 Z" stroke="none"/>
</g>
</svg>
<svg style="left:881px;top:5px" width="20" height="20" viewBox="0 0 20 20"><circle cx="10.3" cy="9.9" r="7.6" fill="#7f7478"/><circle cx="10.3" cy="9.9" r="5.5" fill="#cc98a6"/></svg>
<span style="left:888.00px;top:12.44px;font-size:4.6px;line-height:5.52px;color:#ffffff;font-weight:bold;">RS</span>
<div style="left:918.20px;top:14.50px;width:8.00px;height:0.90px;background:#f0f7f3;"></div>
<svg style="left:946px;top:8px" width="16" height="16" viewBox="0 0 16 16"><g fill="none" stroke="#ffffff" stroke-width="1"><rect x="4.4" y="5.6" width="5.2" height="5.2" rx="1"/><path d="M6.2 5.4 V4.6 Q6.2 3.8 7 3.8 H10.6 Q11.4 3.8 11.4 4.6 V8.2 Q11.4 9 10.6 9 H9.8"/></g></svg>
<svg style="left:977px;top:7px" width="16" height="16" viewBox="0 0 16 16"><path d="M4.6 4.6 L11.4 11.4 M11.4 4.6 L4.6 11.4" stroke="#ffffff" stroke-width="1" fill="none"/></svg>
<div style="left:0.00px;top:31.00px;width:1000.00px;height:20.00px;background:#e9ecf1;"></div>
<span style="left:13.50px;top:36.82px;font-size:8.8px;line-height:10.56px;color:#2b2b2b;transform:scaleX(0.8956);transform-origin:0 50%;">File</span>
<span style="left:44.60px;top:36.82px;font-size:8.8px;line-height:10.56px;color:#2b2b2b;">Home</span>
<span style="left:81.00px;top:36.82px;font-size:8.8px;line-height:10.56px;color:#2b2b2b;transform:scaleX(1.0087);transform-origin:0 50%;">Insert</span>
<span style="left:116.40px;top:36.82px;font-size:8.8px;line-height:10.56px;color:#2b2b2b;transform:scaleX(0.9837);transform-origin:0 50%;">Draw</span>
<span style="left:149.50px;top:36.82px;font-size:8.8px;line-height:10.56px;color:#2b2b2b;transform:scaleX(0.9753);transform-origin:0 50%;">Page Layout</span>
<span style="left:211.80px;top:36.82px;font-size:8.8px;line-height:10.56px;color:#2b2b2b;transform:scaleX(0.9734);transform-origin:0 50%;">Formulas</span>
<span style="left:260.00px;top:36.82px;font-size:8.8px;line-height:10.56px;color:#2b2b2b;transform:scaleX(0.9791);transform-origin:0 50%;">Data</span>
<span style="left:292.80px;top:36.82px;font-size:8.8px;line-height:10.56px;color:#2b2b2b;transform:scaleX(0.9219);transform-origin:0 50%;">Review</span>
<span style="left:333.20px;top:36.82px;font-size:8.8px;line-height:10.56px;color:#2b2b2b;transform:scaleX(0.9886);transform-origin:0 50%;">View</span>
<span style="left:365.20px;top:36.82px;font-size:8.8px;line-height:10.56px;color:#2b2b2b;transform:scaleX(0.9847);transform-origin:0 50%;">Developer</span>
<span style="left:418.20px;top:36.82px;font-size:8.8px;line-height:10.56px;color:#2b2b2b;transform:scaleX(0.9779);transform-origin:0 50%;">Help</span>
<span style="left:449.70px;top:36.82px;font-size:8.8px;line-height:10.56px;color:#2b2b2b;transform:scaleX(0.9712);transform-origin:0 50%;">Power Pivot</span>
<div style="left:946.00px;top:33.40px;width:46.00px;height:14.70px;background:#107c41;border-radius:2px;"></div>
<svg style="left:947.6px;top:36.2px" width="9.6" height="9.6" viewBox="0 0 11 11"><g fill="none" stroke="#ffffff" stroke-width="0.85"><path d="M3.2 4.6 H1.6 V9.4 H7.6 V7.6"/><path d="M3.6 7.2 C3.8 5.2 5.2 4.2 7 4.2 V2.6 L9.6 5 L7 7.4 V5.8 C5.6 5.8 4.6 6.2 3.6 7.2 Z"/></g></svg>
<span style="left:959.80px;top:36.64px;font-size:8.6px;line-height:10.32px;color:#ffffff;font-weight:bold;transform:scaleX(0.9037);transform-origin:0 50%;">Share</span>
<svg style="left:984px;top:38px" width="7" height="7" viewBox="0 0 7 7"><path d="M1.2 2.4 L3.5 4.7 L5.8 2.4" stroke="#ffffff" stroke-width="0.9" fill="none"/></svg>
<div style="left:0.00px;top:559.00px;width:1000.00px;height:18.00px;background:#e7eaf1;"></div>
<svg style="left:0px;top:559px" width="70" height="18" viewBox="0 0 70 18"><circle cx="39" cy="9.3" r="6.4" fill="#f6f7fa"/><g fill="none" stroke="#8c9199" stroke-width="1"><path d="M20.6 5.8 L17.6 9.3 L20.6 12.8"/><path d="M37.8 5.8 L40.8 9.3 L37.8 12.8"/></g><g fill="#333"><circle cx="57.4" cy="9.7" r="0.95"/><circle cx="60.2" cy="9.7" r="0.95"/><circle cx="63" cy="9.7" r="0.95"/></g></svg>
<div style="left:73.00px;top:560.00px;width:62.50px;height:16.00px;background:#ffffcc;border-radius:1.5px;"></div>
<span style="left:79.00px;top:563.00px;font-size:9.5px;line-height:11.40px;color:#262626;transform:scaleX(0.8753);transform-origin:0 50%;">CAPEX 2044</span>
<div style="left:140.00px;top:560.00px;width:56.50px;height:16.00px;background:#ffffcc;border-radius:1.5px;"></div>
<span style="left:146.50px;top:563.00px;font-size:9.5px;line-height:11.40px;color:#262626;transform:scaleX(0.8770);transform-origin:0 50%;">OPEX 2044</span>
<div style="left:201.00px;top:560.00px;width:54.00px;height:16.00px;background:#ffffcc;border-radius:1.5px;"></div>
<span style="left:207.50px;top:563.00px;font-size:9.5px;line-height:11.40px;color:#262626;transform:scaleX(0.9700);transform-origin:0 50%;">D&amp;A 2044</span>
<span style="left:267.00px;top:563.00px;font-size:9.5px;line-height:11.40px;color:#262626;transform:scaleX(0.9061);transform-origin:0 50%;">Sales Summary Charts</span>
<span style="left:374.50px;top:563.00px;font-size:9.5px;line-height:11.40px;color:#262626;transform:scaleX(0.9347);transform-origin:0 50%;">Key Metrics Charts</span>
<span style="left:467.00px;top:563.00px;font-size:9.5px;line-height:11.40px;color:#262626;transform:scaleX(0.8926);transform-origin:0 50%;">KPI Charts</span>
<span style="left:524.50px;top:563.00px;font-size:9.5px;line-height:11.40px;color:#262626;transform:scaleX(0.8416);transform-origin:0 50%;">BEA</span>
<div style="left:551.00px;top:560.00px;width:49.00px;height:16.00px;background:#ffff99;border-radius:1.5px;"></div>
<span style="left:557.50px;top:563.00px;font-size:9.5px;line-height:11.40px;color:#262626;transform:scaleX(0.8749);transform-origin:0 50%;">Expenses</span>
<div style="left:605.00px;top:560.00px;width:91.00px;height:16.00px;background:#ffff99;border-radius:1.5px;"></div>
<span style="left:611.50px;top:563.00px;font-size:9.5px;line-height:11.40px;color:#262626;transform:scaleX(0.9293);transform-origin:0 50%;">COGS Assumptions</span>
<span style="left:810.50px;top:563.00px;font-size:9.5px;line-height:11.40px;color:#262626;transform:scaleX(0.8913);transform-origin:0 50%;">CAPS Table</span>
<div style="left:700.50px;top:559.00px;width:99.00px;height:17.50px;background:#fbfbe9;"></div>
<span style="left:706.50px;top:562.06px;font-size:9.4px;line-height:11.28px;color:#1b1b1b;font-weight:bold;transform:scaleX(0.8941);transform-origin:0 50%;">Salaries Assumptions</span>
<div style="left:706.50px;top:573.60px;width:87.50px;height:1.30px;background:#2f8453;"></div>
<span style="left:873.50px;top:563.00px;font-size:9.5px;line-height:11.40px;color:#262626;transform:scaleX(0.8360);transform-origin:0 50%;">Cl</span>
<div style="left:881.00px;top:559.00px;width:12.00px;height:18.00px;background:#e7eaf1;"></div>
<svg style="left:880px;top:559px" width="108" height="18" viewBox="0 0 108 18">
<g fill="#333"><circle cx="7.9" cy="9.4" r="0.75"/><circle cx="10.2" cy="9.4" r="0.75"/><circle cx="12.5" cy="9.4" r="0.75"/>
<circle cx="52.2" cy="6.6" r="0.7"/><circle cx="52.2" cy="9.4" r="0.7"/><circle cx="52.2" cy="12.2" r="0.7"/></g>
<path d="M26.6 9.4 H35.4 M31 5 V13.8" stroke="#333" stroke-width="1" fill="none"/>
<path d="M70 6.4 L66.2 9.4 L70 12.4 Z" fill="#555"/>
<rect x="73.8" y="6.9" width="10.6" height="5" rx="2" fill="#666"/>
<path d="M101.4 6.4 L105 9.4 L101.4 12.4 Z" fill="#555"/>
</svg>
<div style="left:0.00px;top:577.00px;width:1000.00px;height:15.00px;background:#f5f5f5;"></div>
<span style="left:7.80px;top:582.96px;font-size:7.4px;line-height:8.88px;color:#444444;transform:scaleX(0.8508);transform-origin:0 50%;">Ready</span>
<svg style="left:38px;top:580.6px" width="14" height="12" viewBox="0 0 14 12"><g fill="none" stroke="#4a4a4a" stroke-width="0.9"><rect x="2.6" y="2.4" width="8.4" height="7.4" rx="0.8"/><rect x="2.6" y="2.4" width="8.4" height="2.2" fill="#5a5a5a"/><circle cx="7.8" cy="7.6" r="1.7"/><circle cx="7.8" cy="7.6" r="0.5" fill="#333"/></g></svg>
<svg style="left:59px;top:581.2px" width="14" height="11" viewBox="0 0 14 11"><g fill="none" stroke="#444" stroke-width="0.85"><circle cx="5.6" cy="1.9" r="0.9"/><path d="M2 3.5 H9.2 M5.6 3.5 V6.2 M5.6 6.2 L3.8 9.2 M5.6 6.2 L7.4 9.2"/><path d="M7.6 7.2 L8.8 8.6 L10.6 6.2"/></g></svg>
<span style="left:72.30px;top:583.24px;font-size:7.1px;line-height:8.52px;color:#222222;font-weight:bold;transform:scaleX(0.9311);transform-origin:0 50%;">Accessibility: Investigate</span>
<div style="left:809.00px;top:577.50px;width:21.50px;height:14.50px;background:#e4e4e4;"></div>
<svg style="left:808px;top:577px" width="192" height="15" viewBox="0 0 192 15">
<g fill="none" stroke="#444" stroke-width="0.8">
<rect x="6.8" y="3.2" width="8.4" height="8.4"/><path d="M9.6 3.2 V11.6 M12.4 3.2 V11.6 M6.8 6 H15.2 M6.8 8.8 H15.2"/>
<rect x="32.8" y="3.2" width="8.4" height="8.4"/><path d="M35.6 3.2 V11.6 M38.4 3.2 V11.6 M32.8 5.2 H41.2"/>
<rect x="59" y="3.2" width="8.6" height="8.4"/><path d="M61.8 3.2 V8 H67.6 M64.8 3.2 V8"/>
</g>
<path d="M80.4 7.6 H85.6" stroke="#555" stroke-width="0.8"/>
<path d="M88.2 7.6 H153.2" stroke="#9a9a9a" stroke-width="0.8"/>
<rect x="119.7" y="3.2" width="2.6" height="8.8" rx="0.6" fill="#4a4a4a"/>
<path d="M156.2 7.6 H161.4 M158.8 5 V10.2" stroke="#555" stroke-width="0.8"/>
</svg>
<span style="left:978.20px;top:582.32px;font-size:6.8px;line-height:8.16px;color:#444444;transform:scaleX(0.9085);transform-origin:0 50%;">100%</span>
</div></body></html>
